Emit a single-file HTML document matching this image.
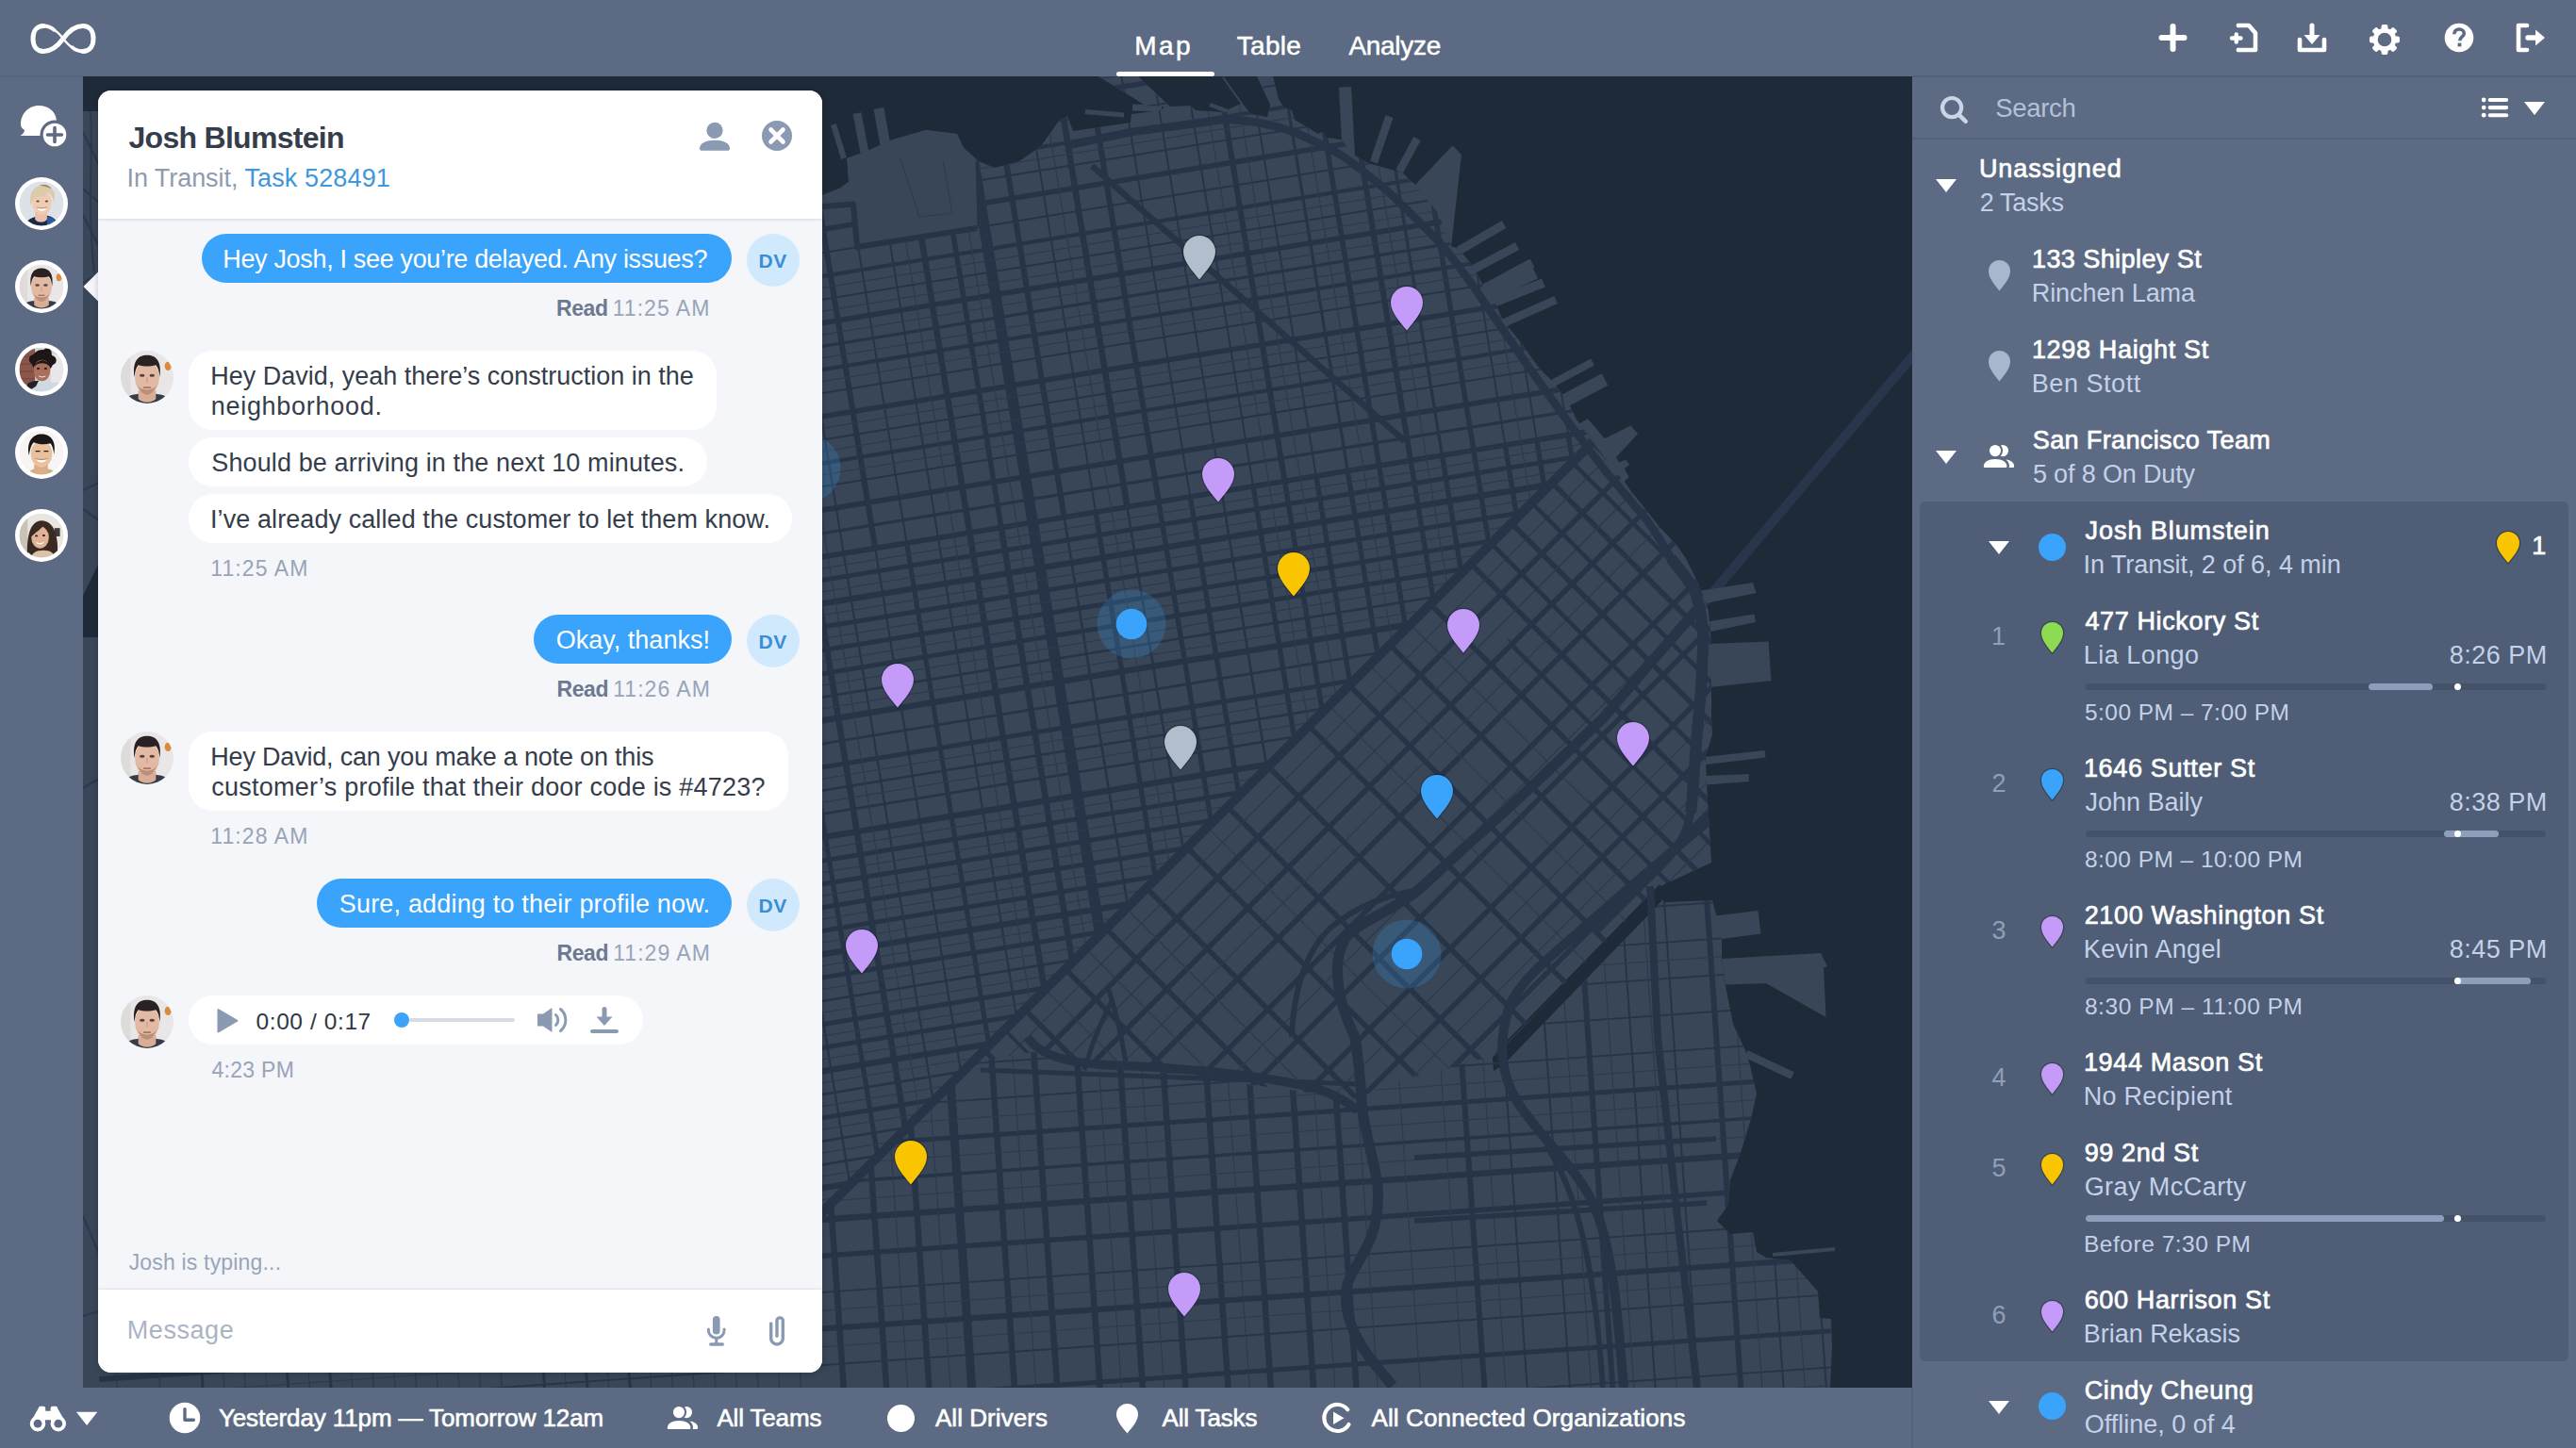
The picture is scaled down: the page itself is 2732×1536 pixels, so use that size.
<!DOCTYPE html><html lang="en"><head><meta charset="utf-8"><title>Dashboard</title>
<style>
*{box-sizing:border-box;margin:0;padding:0}
html,body{width:2732px;height:1536px;overflow:hidden;background:#5c6b83}
body{position:relative;font-family:"Liberation Sans",sans-serif;}
.abs{position:absolute;display:block}
.t{position:absolute;white-space:nowrap;display:block}
.bg{position:absolute}
.layer{position:absolute;left:0;top:0;width:0;height:0}
#chatpanel{position:absolute;left:104px;top:96px;width:768px;height:1360px;border-radius:14px;background:#f4f6fa;overflow:hidden;box-shadow:0 1px 6px rgba(10,20,35,.22)}
#chathead{position:absolute;left:0;top:0;width:768px;height:136px;background:#fff;box-shadow:0 1px 3px rgba(60,80,110,.18)}
#chatinput{position:absolute;left:0;top:1272px;width:768px;height:88px;background:#fff;box-shadow:0 -1px 2px rgba(60,80,110,.12)}
</style></head><body>
<div class="bg" style="left:0;top:0;width:2732px;height:1536px;background:#5c6b83"></div>
<svg id="map" class="abs" style="left:88px;top:81px" width="1940" height="1391" viewBox="88 81 1940 1391">
<rect x="88" y="81" width="1940" height="1391" fill="#1e2a38"/>
<path d="M1806.0 641.0L2040.0 364.0" stroke="#28354b" stroke-width="10" stroke-linecap="butt" fill="none"/>
<polygon points="88.0,118.0 300.0,118.0 700.0,150.0 860.0,212.0 872.0,207.0 890.0,200.0 900.0,193.0 898.0,168.0 920.0,160.0 947.0,148.0 982.0,138.0 1015.0,142.0 1022.0,157.0 1038.0,171.0 1055.0,178.0 1081.0,171.0 1104.0,155.0 1123.0,128.0 1132.0,123.0 1138.0,139.0 1199.0,130.0 1200.0,121.0 1232.0,117.0 1234.0,113.0 1215.0,112.0 1165.0,81.0 1207.0,81.0 1241.0,113.0 1263.0,112.0 1268.0,117.0 1300.0,119.0 1303.0,116.0 1317.0,109.0 1327.0,121.0 1344.0,124.0 1347.0,111.0 1333.0,81.0 1350.0,81.0 1356.0,105.0 1361.0,113.0 1370.0,117.0 1373.0,127.0 1398.0,142.0 1403.0,140.0 1407.0,146.0 1422.0,148.0 1437.0,165.0 1451.0,173.0 1479.0,181.0 1488.0,184.0 1501.0,196.0 1525.0,226.0 1539.0,261.0 1547.0,264.0 1562.0,282.0 1573.0,303.0 1584.0,316.0 1594.0,340.0 1612.0,362.0 1632.0,390.0 1647.0,405.0 1662.0,424.0 1672.0,445.0 1690.0,470.0 1710.0,496.0 1729.0,520.0 1745.0,540.0 1761.0,560.0 1778.0,578.0 1787.0,591.0 1797.0,610.0 1804.0,626.0 1812.0,648.0 1815.0,683.0 1815.0,760.0 1816.0,779.0 1809.0,803.0 1810.0,832.0 1815.0,915.0 1757.0,942.0 1765.0,957.0 1816.0,955.0 1820.0,970.0 1826.0,996.0 1826.0,1017.0 1830.0,1046.0 1838.0,1086.0 1851.0,1114.0 1856.0,1130.0 1863.0,1160.0 1857.0,1187.0 1846.0,1223.0 1835.0,1252.0 1833.0,1278.0 1821.0,1295.0 1835.0,1309.0 1859.0,1307.0 1863.0,1328.0 1873.0,1334.0 1899.0,1337.0 1928.0,1370.0 1930.0,1398.0 1942.0,1399.0 1943.0,1428.0 1941.0,1472.0 88.0,1472.0" fill="#384658" />
<polygon points="897.9,167.1 886.9,131.1 881.1,132.9 892.1,168.9" fill="#384658" />
<polygon points="921.4,161.2 913.4,119.2 904.6,120.8 912.6,162.8" fill="#384658" />
<polygon points="945.4,159.0 937.4,114.0 926.6,116.0 934.6,161.0" fill="#384658" />
<polygon points="1150.8,121.0 1191.8,124.5 1192.2,119.5 1151.2,116.0" fill="#384658" />
<polygon points="1200.9,117.5 1231.9,118.5 1232.1,111.5 1201.1,110.5" fill="#384658" />
<polygon points="1282.3,112.9 1301.3,119.9 1302.7,116.1 1283.7,109.1" fill="#384658" />
<polygon points="1296.2,82.6 1316.2,110.6 1317.8,109.4 1297.8,81.4" fill="#384658" />
<polygon points="1420.0,92.5 1433.0,92.0 1437.0,165.0 1423.0,150.0" fill="#384658" />
<polygon points="1461.0,173.4 1477.5,124.9 1469.5,122.1 1453.0,170.6" fill="#384658" />
<polygon points="1487.7,184.0 1506.7,149.0 1499.3,145.0 1480.3,180.0" fill="#384658" />
<polygon points="1501.0,196.0 1540.5,154.5 1550.0,164.0 1539.0,262.0" fill="#384658" />
<polygon points="1549.3,269.9 1597.3,241.9 1592.7,234.1 1544.7,262.1" fill="#384658" />
<polygon points="1564.1,290.0 1611.1,265.0 1606.9,257.0 1559.9,282.0" fill="#384658" />
<polygon points="1575.4,311.4 1627.4,283.4 1622.6,274.6 1570.6,302.6" fill="#384658" />
<polygon points="1585.8,325.6 1638.8,304.6 1635.2,295.4 1582.2,316.4" fill="#384658" />
<polygon points="1580.1,320.3 1631.1,295.3 1624.9,282.7 1573.9,307.7" fill="#384658" />
<polygon points="1595.8,347.1 1651.8,322.1 1648.2,313.9 1592.2,338.9" fill="#384658" />
<polygon points="1647.9,410.5 1690.9,387.5 1687.1,380.5 1644.1,403.5" fill="#384658" />
<polygon points="1674.0,449.7 1684.0,444.2 1701.8,465.2 1729.4,451.4 1737.0,460.2 1714.0,485.0 1717.2,490.6 1724.0,487.8 1728.3,492.8 1722.8,497.2 1727.7,506.0 1722.8,510.5 1729.4,520.4 1700.0,490.0" fill="#384658" />
<polygon points="1658.3,433.7 1705.3,408.7 1698.7,396.3 1651.7,421.3" fill="#384658" />
<polygon points="1804.0,626.5 1859.0,618.0 1862.5,629.0 1809.0,640.0" fill="#384658" />
<polygon points="1813.0,659.0 1860.5,651.5 1862.0,660.0 1814.0,670.0" fill="#384658" />
<polygon points="1813.0,683.0 1875.5,680.5 1878.5,722.0 1813.0,729.0" fill="#384658" />
<polygon points="1808.0,803.0 1871.5,796.0 1872.5,803.5 1809.0,811.0" fill="#384658" />
<polygon points="1809.0,823.0 1854.5,821.0 1855.0,829.0 1810.0,832.5" fill="#384658" />
<polygon points="1815.0,972.0 1864.5,966.0 1867.5,990.5 1826.0,996.0" fill="#384658" />
<polygon points="1826.0,1017.0 1931.0,1011.0 1938.0,1025.0 1934.0,1026.5 1936.5,1079.0 1873.0,1043.0 1830.0,1044.5" fill="#384658" />
<polygon points="1850.2,1121.8 1899.2,1144.8 1902.8,1137.2 1853.8,1114.2" fill="#384658" />
<polygon points="1880.2,1333.0 1946.2,1327.0 1945.8,1323.0 1879.8,1329.0" fill="#384658" />
<polygon points="1760.0,938.0 1768.0,950.0 1596.0,1128.0 1584.0,1136.0 1583.0,1122.0 1590.0,1112.0" fill="#1e2a38" />
<defs>
<clipPath id="landclip"><polygon points="88.0,118.0 300.0,118.0 700.0,150.0 860.0,212.0 872.0,207.0 890.0,200.0 900.0,193.0 898.0,168.0 920.0,160.0 947.0,148.0 982.0,138.0 1015.0,142.0 1022.0,157.0 1038.0,171.0 1055.0,178.0 1081.0,171.0 1104.0,155.0 1123.0,128.0 1132.0,123.0 1138.0,139.0 1199.0,130.0 1200.0,121.0 1232.0,117.0 1234.0,113.0 1215.0,112.0 1165.0,81.0 1207.0,81.0 1241.0,113.0 1263.0,112.0 1268.0,117.0 1300.0,119.0 1303.0,116.0 1317.0,109.0 1327.0,121.0 1344.0,124.0 1347.0,111.0 1333.0,81.0 1350.0,81.0 1356.0,105.0 1361.0,113.0 1370.0,117.0 1373.0,127.0 1398.0,142.0 1403.0,140.0 1407.0,146.0 1422.0,148.0 1437.0,165.0 1451.0,173.0 1479.0,181.0 1488.0,184.0 1501.0,196.0 1525.0,226.0 1539.0,261.0 1547.0,264.0 1562.0,282.0 1573.0,303.0 1584.0,316.0 1594.0,340.0 1612.0,362.0 1632.0,390.0 1647.0,405.0 1662.0,424.0 1672.0,445.0 1690.0,470.0 1710.0,496.0 1729.0,520.0 1745.0,540.0 1761.0,560.0 1778.0,578.0 1787.0,591.0 1797.0,610.0 1804.0,626.0 1812.0,648.0 1815.0,683.0 1815.0,760.0 1816.0,779.0 1809.0,803.0 1810.0,832.0 1815.0,915.0 1757.0,942.0 1765.0,957.0 1816.0,955.0 1820.0,970.0 1826.0,996.0 1826.0,1017.0 1830.0,1046.0 1838.0,1086.0 1851.0,1114.0 1856.0,1130.0 1863.0,1160.0 1857.0,1187.0 1846.0,1223.0 1835.0,1252.0 1833.0,1278.0 1821.0,1295.0 1835.0,1309.0 1859.0,1307.0 1863.0,1328.0 1873.0,1334.0 1899.0,1337.0 1928.0,1370.0 1930.0,1398.0 1942.0,1399.0 1943.0,1428.0 1941.0,1472.0 88.0,1472.0"/></clipPath>
<clipPath id="cN"><polygon points="88.0,81.0 1700.0,81.0 1700.0,455.0 1690.0,468.0 872.0,1286.0 88.0,1286.0"/></clipPath>
<clipPath id="cS"><polygon points="1690.0,468.0 1840.0,600.0 1840.0,915.0 1757.0,942.0 1588.0,1119.0 1470.0,1150.0 1440.0,1166.0 1250.0,1140.0 1096.0,1116.0 1030.0,1127.0 1017.4,1140.6"/></clipPath>
<clipPath id="cM"><polygon points="88.0,1286.0 872.0,1286.0 1017.4,1140.6 1030.0,1127.0 1096.0,1116.0 1250.0,1140.0 1440.0,1166.0 1470.0,1150.0 1588.0,1119.0 1596.0,1128.0 1768.0,950.0 1900.0,950.0 2028.0,1100.0 2028.0,1472.0 88.0,1472.0"/></clipPath>
</defs>
<g clip-path="url(#landclip)">
<defs><clipPath id="cNa"><polygon points="88.0,81.0 1700.0,81.0 1700.0,455.2 88.0,718.9"/></clipPath><clipPath id="cNb"><polygon points="88.0,718.9 1700.0,455.2 1700.0,455.0 1690.0,468.0 872.0,1286.0 88.0,1286.0"/></clipPath></defs>
<g clip-path="url(#cNa)"><path d="M-2094.6 -362.4L3826.7 -1331.1" stroke="#273447" stroke-width="5.6" stroke-linecap="butt" fill="none"/><path d="M-2090.7 -338.3L3830.6 -1307.0" stroke="#273447" stroke-width="2.0" stroke-linecap="butt" fill="none"/><path d="M-2086.7 -314.1L3834.6 -1282.8" stroke="#273447" stroke-width="4.2" stroke-linecap="butt" fill="none"/><path d="M-2082.8 -289.9L3838.5 -1258.7" stroke="#273447" stroke-width="3.2" stroke-linecap="butt" fill="none"/><path d="M-2078.8 -265.8L3842.5 -1234.5" stroke="#273447" stroke-width="5.6" stroke-linecap="butt" fill="none"/><path d="M-2074.9 -241.6L3846.4 -1210.4" stroke="#273447" stroke-width="2.0" stroke-linecap="butt" fill="none"/><path d="M-2070.9 -217.5L3850.4 -1186.2" stroke="#273447" stroke-width="4.2" stroke-linecap="butt" fill="none"/><path d="M-2067.0 -193.3L3854.3 -1162.1" stroke="#273447" stroke-width="2.0" stroke-linecap="butt" fill="none"/><path d="M-2063.0 -169.2L3858.3 -1137.9" stroke="#273447" stroke-width="5.6" stroke-linecap="butt" fill="none"/><path d="M-2059.0 -145.0L3862.2 -1113.7" stroke="#273447" stroke-width="2.0" stroke-linecap="butt" fill="none"/><path d="M-2055.1 -120.9L3866.2 -1089.6" stroke="#273447" stroke-width="4.2" stroke-linecap="butt" fill="none"/><path d="M-2051.1 -96.7L3870.1 -1065.4" stroke="#273447" stroke-width="2.0" stroke-linecap="butt" fill="none"/><path d="M-2047.2 -72.6L3874.1 -1041.3" stroke="#273447" stroke-width="5.6" stroke-linecap="butt" fill="none"/><path d="M-2043.2 -48.4L3878.0 -1017.1" stroke="#273447" stroke-width="2.0" stroke-linecap="butt" fill="none"/><path d="M-2039.3 -24.3L3882.0 -993.0" stroke="#273447" stroke-width="4.2" stroke-linecap="butt" fill="none"/><path d="M-2035.3 -0.1L3885.9 -968.8" stroke="#273447" stroke-width="2.0" stroke-linecap="butt" fill="none"/><path d="M-2031.4 24.0L3889.9 -944.7" stroke="#273447" stroke-width="5.6" stroke-linecap="butt" fill="none"/><path d="M-2027.4 48.2L3893.8 -920.5" stroke="#273447" stroke-width="2.0" stroke-linecap="butt" fill="none"/><path d="M-2023.5 72.4L3897.8 -896.4" stroke="#273447" stroke-width="2.0" stroke-linecap="butt" fill="none"/><path d="M-2019.5 96.5L3901.7 -872.2" stroke="#273447" stroke-width="2.0" stroke-linecap="butt" fill="none"/><path d="M-2015.6 120.7L3905.7 -848.1" stroke="#273447" stroke-width="5.6" stroke-linecap="butt" fill="none"/><path d="M-2011.6 144.8L3909.7 -823.9" stroke="#273447" stroke-width="2.0" stroke-linecap="butt" fill="none"/><path d="M-2007.7 169.0L3913.6 -799.8" stroke="#273447" stroke-width="2.0" stroke-linecap="butt" fill="none"/><path d="M-2003.7 193.1L3917.6 -775.6" stroke="#273447" stroke-width="3.2" stroke-linecap="butt" fill="none"/><path d="M-1999.8 217.3L3921.5 -751.4" stroke="#273447" stroke-width="5.6" stroke-linecap="butt" fill="none"/><path d="M-1995.8 241.4L3925.5 -727.3" stroke="#273447" stroke-width="2.0" stroke-linecap="butt" fill="none"/><path d="M-1991.9 265.6L3929.4 -703.1" stroke="#273447" stroke-width="4.2" stroke-linecap="butt" fill="none"/><path d="M-1987.9 289.7L3933.4 -679.0" stroke="#273447" stroke-width="3.2" stroke-linecap="butt" fill="none"/><path d="M-1984.0 313.9L3937.3 -654.8" stroke="#273447" stroke-width="5.6" stroke-linecap="butt" fill="none"/><path d="M-1980.0 338.0L3941.3 -630.7" stroke="#273447" stroke-width="2.0" stroke-linecap="butt" fill="none"/><path d="M-1976.1 362.2L3945.2 -606.5" stroke="#273447" stroke-width="2.0" stroke-linecap="butt" fill="none"/><path d="M-1972.1 386.4L3949.2 -582.4" stroke="#273447" stroke-width="2.0" stroke-linecap="butt" fill="none"/><path d="M-1968.2 410.5L3953.1 -558.2" stroke="#273447" stroke-width="5.6" stroke-linecap="butt" fill="none"/><path d="M-1964.2 434.7L3957.1 -534.1" stroke="#273447" stroke-width="2.0" stroke-linecap="butt" fill="none"/><path d="M-1960.3 458.8L3961.0 -509.9" stroke="#273447" stroke-width="4.2" stroke-linecap="butt" fill="none"/><path d="M-1956.3 483.0L3965.0 -485.8" stroke="#273447" stroke-width="2.0" stroke-linecap="butt" fill="none"/><path d="M-1952.4 507.1L3968.9 -461.6" stroke="#273447" stroke-width="5.6" stroke-linecap="butt" fill="none"/><path d="M-1948.4 531.3L3972.9 -437.4" stroke="#273447" stroke-width="3.2" stroke-linecap="butt" fill="none"/><path d="M-1944.5 555.4L3976.8 -413.3" stroke="#273447" stroke-width="4.2" stroke-linecap="butt" fill="none"/><path d="M-1940.5 579.6L3980.8 -389.1" stroke="#273447" stroke-width="2.0" stroke-linecap="butt" fill="none"/><path d="M-1936.6 603.7L3984.7 -365.0" stroke="#273447" stroke-width="5.6" stroke-linecap="butt" fill="none"/><path d="M-1932.6 627.9L3988.7 -340.8" stroke="#273447" stroke-width="2.0" stroke-linecap="butt" fill="none"/><path d="M-1928.6 652.0L3992.6 -316.7" stroke="#273447" stroke-width="4.2" stroke-linecap="butt" fill="none"/><path d="M-1924.7 676.2L3996.6 -292.5" stroke="#273447" stroke-width="2.0" stroke-linecap="butt" fill="none"/><path d="M-1920.7 700.3L4000.5 -268.4" stroke="#273447" stroke-width="5.6" stroke-linecap="butt" fill="none"/><path d="M-1916.8 724.5L4004.5 -244.2" stroke="#273447" stroke-width="2.0" stroke-linecap="butt" fill="none"/><path d="M-1912.8 748.7L4008.4 -220.1" stroke="#273447" stroke-width="4.2" stroke-linecap="butt" fill="none"/><path d="M-1908.9 772.8L4012.4 -195.9" stroke="#273447" stroke-width="2.0" stroke-linecap="butt" fill="none"/><path d="M-1904.9 797.0L4016.3 -171.8" stroke="#273447" stroke-width="5.6" stroke-linecap="butt" fill="none"/><path d="M-1901.0 821.1L4020.3 -147.6" stroke="#273447" stroke-width="3.2" stroke-linecap="butt" fill="none"/><path d="M-1897.0 845.3L4024.2 -123.5" stroke="#273447" stroke-width="4.2" stroke-linecap="butt" fill="none"/><path d="M-1893.1 869.4L4028.2 -99.3" stroke="#273447" stroke-width="2.0" stroke-linecap="butt" fill="none"/><path d="M-1889.1 893.6L4032.1 -75.1" stroke="#273447" stroke-width="5.6" stroke-linecap="butt" fill="none"/><path d="M-1885.2 917.7L4036.1 -51.0" stroke="#273447" stroke-width="2.0" stroke-linecap="butt" fill="none"/><path d="M-1881.2 941.9L4040.1 -26.8" stroke="#273447" stroke-width="4.2" stroke-linecap="butt" fill="none"/><path d="M-1877.3 966.0L4044.0 -2.7" stroke="#273447" stroke-width="2.0" stroke-linecap="butt" fill="none"/><path d="M-1873.3 990.2L4048.0 21.5" stroke="#273447" stroke-width="5.6" stroke-linecap="butt" fill="none"/><path d="M-1869.4 1014.3L4051.9 45.6" stroke="#273447" stroke-width="3.2" stroke-linecap="butt" fill="none"/><path d="M-1865.4 1038.5L4055.9 69.8" stroke="#273447" stroke-width="5.6" stroke-linecap="butt" fill="none"/><path d="M-1861.5 1062.7L4059.8 93.9" stroke="#273447" stroke-width="3.2" stroke-linecap="butt" fill="none"/><path d="M-1857.5 1086.8L4063.8 118.1" stroke="#273447" stroke-width="5.6" stroke-linecap="butt" fill="none"/><path d="M-1853.6 1111.0L4067.7 142.2" stroke="#273447" stroke-width="2.0" stroke-linecap="butt" fill="none"/><path d="M-1849.6 1135.1L4071.7 166.4" stroke="#273447" stroke-width="4.2" stroke-linecap="butt" fill="none"/><path d="M-1845.7 1159.3L4075.6 190.5" stroke="#273447" stroke-width="2.0" stroke-linecap="butt" fill="none"/><path d="M-1841.7 1183.4L4079.6 214.7" stroke="#273447" stroke-width="5.6" stroke-linecap="butt" fill="none"/><path d="M-1837.8 1207.6L4083.5 238.9" stroke="#273447" stroke-width="3.2" stroke-linecap="butt" fill="none"/><path d="M-1833.8 1231.7L4087.5 263.0" stroke="#273447" stroke-width="2.0" stroke-linecap="butt" fill="none"/><path d="M-1829.9 1255.9L4091.4 287.2" stroke="#273447" stroke-width="2.0" stroke-linecap="butt" fill="none"/><path d="M-1825.9 1280.0L4095.4 311.3" stroke="#273447" stroke-width="5.6" stroke-linecap="butt" fill="none"/><path d="M-1822.0 1304.2L4099.3 335.5" stroke="#273447" stroke-width="3.2" stroke-linecap="butt" fill="none"/><path d="M-1818.0 1328.3L4103.3 359.6" stroke="#273447" stroke-width="4.2" stroke-linecap="butt" fill="none"/><path d="M-1814.1 1352.5L4107.2 383.8" stroke="#273447" stroke-width="2.0" stroke-linecap="butt" fill="none"/><path d="M-1810.1 1376.6L4111.2 407.9" stroke="#273447" stroke-width="5.6" stroke-linecap="butt" fill="none"/><path d="M-1806.2 1400.8L4115.1 432.1" stroke="#273447" stroke-width="3.2" stroke-linecap="butt" fill="none"/><path d="M-1802.2 1425.0L4119.1 456.2" stroke="#273447" stroke-width="4.2" stroke-linecap="butt" fill="none"/><path d="M-1798.2 1449.1L4123.0 480.4" stroke="#273447" stroke-width="2.0" stroke-linecap="butt" fill="none"/><path d="M-1794.3 1473.3L4127.0 504.5" stroke="#273447" stroke-width="5.6" stroke-linecap="butt" fill="none"/><path d="M-1790.3 1497.4L4130.9 528.7" stroke="#273447" stroke-width="2.0" stroke-linecap="butt" fill="none"/><path d="M-1786.4 1521.6L4134.9 552.8" stroke="#273447" stroke-width="2.0" stroke-linecap="butt" fill="none"/><path d="M-1782.4 1545.7L4138.8 577.0" stroke="#273447" stroke-width="3.2" stroke-linecap="butt" fill="none"/><path d="M-1778.5 1569.9L4142.8 601.2" stroke="#273447" stroke-width="5.6" stroke-linecap="butt" fill="none"/><path d="M-1774.5 1594.0L4146.7 625.3" stroke="#273447" stroke-width="2.0" stroke-linecap="butt" fill="none"/><path d="M-1770.6 1618.2L4150.7 649.5" stroke="#273447" stroke-width="2.0" stroke-linecap="butt" fill="none"/><path d="M-1766.6 1642.3L4154.6 673.6" stroke="#273447" stroke-width="2.0" stroke-linecap="butt" fill="none"/><path d="M-1762.7 1666.5L4158.6 697.8" stroke="#273447" stroke-width="5.6" stroke-linecap="butt" fill="none"/><path d="M-1758.7 1690.6L4162.5 721.9" stroke="#273447" stroke-width="3.2" stroke-linecap="butt" fill="none"/><path d="M-1754.8 1714.8L4166.5 746.1" stroke="#273447" stroke-width="4.2" stroke-linecap="butt" fill="none"/><path d="M-1750.8 1739.0L4170.5 770.2" stroke="#273447" stroke-width="2.0" stroke-linecap="butt" fill="none"/><path d="M-1746.9 1763.1L4174.4 794.4" stroke="#273447" stroke-width="5.6" stroke-linecap="butt" fill="none"/><path d="M-1742.9 1787.3L4178.4 818.5" stroke="#273447" stroke-width="2.0" stroke-linecap="butt" fill="none"/><path d="M-1739.0 1811.4L4182.3 842.7" stroke="#273447" stroke-width="2.0" stroke-linecap="butt" fill="none"/><path d="M-1735.0 1835.6L4186.3 866.8" stroke="#273447" stroke-width="3.2" stroke-linecap="butt" fill="none"/><path d="M-1731.1 1859.7L4190.2 891.0" stroke="#273447" stroke-width="5.6" stroke-linecap="butt" fill="none"/><path d="M-1727.1 1883.9L4194.2 915.2" stroke="#273447" stroke-width="2.0" stroke-linecap="butt" fill="none"/><path d="M-1723.2 1908.0L4198.1 939.3" stroke="#273447" stroke-width="2.0" stroke-linecap="butt" fill="none"/><path d="M-1719.2 1932.2L4202.1 963.5" stroke="#273447" stroke-width="2.0" stroke-linecap="butt" fill="none"/><path d="M-1715.3 1956.3L4206.0 987.6" stroke="#273447" stroke-width="5.6" stroke-linecap="butt" fill="none"/><path d="M-1711.3 1980.5L4210.0 1011.8" stroke="#273447" stroke-width="3.2" stroke-linecap="butt" fill="none"/><path d="M-1707.4 2004.6L4213.9 1035.9" stroke="#273447" stroke-width="2.0" stroke-linecap="butt" fill="none"/><path d="M-1703.4 2028.8L4217.9 1060.1" stroke="#273447" stroke-width="3.2" stroke-linecap="butt" fill="none"/><path d="M-1699.5 2052.9L4221.8 1084.2" stroke="#273447" stroke-width="5.6" stroke-linecap="butt" fill="none"/><path d="M-1695.5 2077.1L4225.8 1108.4" stroke="#273447" stroke-width="3.2" stroke-linecap="butt" fill="none"/><path d="M-1691.6 2101.3L4229.7 1132.5" stroke="#273447" stroke-width="4.2" stroke-linecap="butt" fill="none"/><path d="M-1687.6 2125.4L4233.7 1156.7" stroke="#273447" stroke-width="2.0" stroke-linecap="butt" fill="none"/><path d="M-1683.7 2149.6L4237.6 1180.8" stroke="#273447" stroke-width="5.6" stroke-linecap="butt" fill="none"/><path d="M-1679.7 2173.7L4241.6 1205.0" stroke="#273447" stroke-width="3.2" stroke-linecap="butt" fill="none"/><path d="M-1675.8 2197.9L4245.5 1229.1" stroke="#273447" stroke-width="4.2" stroke-linecap="butt" fill="none"/><path d="M-1671.8 2222.0L4249.5 1253.3" stroke="#273447" stroke-width="2.0" stroke-linecap="butt" fill="none"/><path d="M-1667.8 2246.2L4253.4 1277.5" stroke="#273447" stroke-width="5.6" stroke-linecap="butt" fill="none"/><path d="M-1663.9 2270.3L4257.4 1301.6" stroke="#273447" stroke-width="2.0" stroke-linecap="butt" fill="none"/><path d="M-1659.9 2294.5L4261.3 1325.8" stroke="#273447" stroke-width="4.2" stroke-linecap="butt" fill="none"/><path d="M-1656.0 2318.6L4265.3 1349.9" stroke="#273447" stroke-width="2.0" stroke-linecap="butt" fill="none"/><path d="M-1652.0 2342.8L4269.2 1374.1" stroke="#273447" stroke-width="5.6" stroke-linecap="butt" fill="none"/><path d="M-1648.1 2366.9L4273.2 1398.2" stroke="#273447" stroke-width="3.2" stroke-linecap="butt" fill="none"/><path d="M-1644.1 2391.1L4277.1 1422.4" stroke="#273447" stroke-width="4.2" stroke-linecap="butt" fill="none"/><path d="M-1640.2 2415.2L4281.1 1446.5" stroke="#273447" stroke-width="2.0" stroke-linecap="butt" fill="none"/><path d="M-1636.2 2439.4L4285.0 1470.7" stroke="#273447" stroke-width="5.6" stroke-linecap="butt" fill="none"/><path d="M-1632.3 2463.6L4289.0 1494.8" stroke="#273447" stroke-width="2.0" stroke-linecap="butt" fill="none"/><path d="M-1628.3 2487.7L4292.9 1519.0" stroke="#273447" stroke-width="2.0" stroke-linecap="butt" fill="none"/><path d="M-1624.4 2511.9L4296.9 1543.1" stroke="#273447" stroke-width="2.0" stroke-linecap="butt" fill="none"/><path d="M-1620.4 2536.0L4300.9 1567.3" stroke="#273447" stroke-width="5.6" stroke-linecap="butt" fill="none"/><path d="M-884.5 -2112.3L84.2 3809.0" stroke="#273447" stroke-width="2.0" stroke-linecap="butt" fill="none"/><path d="M-851.1 -2117.7L117.6 3803.6" stroke="#273447" stroke-width="2.0" stroke-linecap="butt" fill="none"/><path d="M-817.7 -2123.2L151.0 3798.1" stroke="#273447" stroke-width="3.2" stroke-linecap="butt" fill="none"/><path d="M-784.3 -2128.7L184.4 3792.6" stroke="#273447" stroke-width="3.2" stroke-linecap="butt" fill="none"/><path d="M-750.9 -2134.1L217.8 3787.2" stroke="#273447" stroke-width="3.2" stroke-linecap="butt" fill="none"/><path d="M-717.5 -2139.6L251.2 3781.7" stroke="#273447" stroke-width="2.0" stroke-linecap="butt" fill="none"/><path d="M-684.1 -2145.1L284.7 3776.2" stroke="#273447" stroke-width="2.0" stroke-linecap="butt" fill="none"/><path d="M-650.7 -2150.5L318.1 3770.8" stroke="#273447" stroke-width="2.0" stroke-linecap="butt" fill="none"/><path d="M-617.3 -2156.0L351.5 3765.3" stroke="#273447" stroke-width="3.2" stroke-linecap="butt" fill="none"/><path d="M-583.9 -2161.4L384.9 3759.8" stroke="#273447" stroke-width="3.2" stroke-linecap="butt" fill="none"/><path d="M-550.4 -2166.9L418.3 3754.4" stroke="#273447" stroke-width="2.0" stroke-linecap="butt" fill="none"/><path d="M-517.0 -2172.4L451.7 3748.9" stroke="#273447" stroke-width="2.0" stroke-linecap="butt" fill="none"/><path d="M-483.6 -2177.8L485.1 3743.4" stroke="#273447" stroke-width="2.0" stroke-linecap="butt" fill="none"/><path d="M-450.2 -2183.3L518.5 3738.0" stroke="#273447" stroke-width="2.0" stroke-linecap="butt" fill="none"/><path d="M-416.8 -2188.8L551.9 3732.5" stroke="#273447" stroke-width="2.0" stroke-linecap="butt" fill="none"/><path d="M-383.4 -2194.2L585.3 3727.0" stroke="#273447" stroke-width="2.0" stroke-linecap="butt" fill="none"/><path d="M-350.0 -2199.7L618.7 3721.6" stroke="#273447" stroke-width="2.0" stroke-linecap="butt" fill="none"/><path d="M-316.6 -2205.2L652.1 3716.1" stroke="#273447" stroke-width="2.0" stroke-linecap="butt" fill="none"/><path d="M-283.2 -2210.6L685.5 3710.6" stroke="#273447" stroke-width="2.0" stroke-linecap="butt" fill="none"/><path d="M-249.8 -2216.1L718.9 3705.2" stroke="#273447" stroke-width="2.0" stroke-linecap="butt" fill="none"/><path d="M-216.4 -2221.6L752.3 3699.7" stroke="#273447" stroke-width="2.0" stroke-linecap="butt" fill="none"/><path d="M-183.0 -2227.0L785.7 3694.3" stroke="#273447" stroke-width="3.2" stroke-linecap="butt" fill="none"/><path d="M-149.6 -2232.5L819.1 3688.8" stroke="#273447" stroke-width="3.2" stroke-linecap="butt" fill="none"/><path d="M-116.2 -2238.0L852.6 3683.3" stroke="#273447" stroke-width="2.0" stroke-linecap="butt" fill="none"/><path d="M-82.8 -2243.4L886.0 3677.9" stroke="#273447" stroke-width="3.2" stroke-linecap="butt" fill="none"/><path d="M-49.4 -2248.9L919.4 3672.4" stroke="#273447" stroke-width="3.2" stroke-linecap="butt" fill="none"/><path d="M-16.0 -2254.4L952.8 3666.9" stroke="#273447" stroke-width="2.0" stroke-linecap="butt" fill="none"/><path d="M17.5 -2259.8L986.2 3661.5" stroke="#273447" stroke-width="3.2" stroke-linecap="butt" fill="none"/><path d="M50.9 -2265.3L1019.6 3656.0" stroke="#273447" stroke-width="3.2" stroke-linecap="butt" fill="none"/><path d="M84.3 -2270.8L1053.0 3650.5" stroke="#273447" stroke-width="3.2" stroke-linecap="butt" fill="none"/><path d="M117.7 -2276.2L1086.4 3645.1" stroke="#273447" stroke-width="3.2" stroke-linecap="butt" fill="none"/><path d="M151.1 -2281.7L1119.8 3639.6" stroke="#273447" stroke-width="2.0" stroke-linecap="butt" fill="none"/><path d="M184.5 -2287.1L1153.2 3634.1" stroke="#273447" stroke-width="2.0" stroke-linecap="butt" fill="none"/><path d="M217.9 -2292.6L1186.6 3628.7" stroke="#273447" stroke-width="2.0" stroke-linecap="butt" fill="none"/><path d="M251.3 -2298.1L1220.0 3623.2" stroke="#273447" stroke-width="3.2" stroke-linecap="butt" fill="none"/><path d="M284.7 -2303.5L1253.4 3617.7" stroke="#273447" stroke-width="2.0" stroke-linecap="butt" fill="none"/><path d="M318.1 -2309.0L1286.8 3612.3" stroke="#273447" stroke-width="2.0" stroke-linecap="butt" fill="none"/><path d="M351.5 -2314.5L1320.2 3606.8" stroke="#273447" stroke-width="6" stroke-linecap="butt" fill="none"/><path d="M384.9 -2319.9L1353.6 3601.3" stroke="#273447" stroke-width="2.0" stroke-linecap="butt" fill="none"/><path d="M418.3 -2325.4L1387.0 3595.9" stroke="#273447" stroke-width="2.0" stroke-linecap="butt" fill="none"/><path d="M451.7 -2330.9L1420.5 3590.4" stroke="#273447" stroke-width="6" stroke-linecap="butt" fill="none"/><path d="M485.1 -2336.3L1453.9 3584.9" stroke="#273447" stroke-width="2.0" stroke-linecap="butt" fill="none"/><path d="M518.5 -2341.8L1487.3 3579.5" stroke="#273447" stroke-width="2.0" stroke-linecap="butt" fill="none"/><path d="M551.9 -2347.3L1520.7 3574.0" stroke="#273447" stroke-width="6.5" stroke-linecap="butt" fill="none"/><path d="M585.4 -2352.7L1554.1 3568.6" stroke="#273447" stroke-width="5.5" stroke-linecap="butt" fill="none"/><path d="M618.8 -2358.2L1587.5 3563.1" stroke="#273447" stroke-width="11.5" stroke-linecap="butt" fill="none"/><path d="M652.2 -2363.7L1620.9 3557.6" stroke="#273447" stroke-width="6" stroke-linecap="butt" fill="none"/><path d="M685.6 -2369.1L1654.3 3552.2" stroke="#273447" stroke-width="2.0" stroke-linecap="butt" fill="none"/><path d="M719.0 -2374.6L1687.7 3546.7" stroke="#273447" stroke-width="6.5" stroke-linecap="butt" fill="none"/><path d="M752.4 -2380.1L1721.1 3541.2" stroke="#273447" stroke-width="6" stroke-linecap="butt" fill="none"/><path d="M785.8 -2385.5L1754.5 3535.8" stroke="#273447" stroke-width="2.0" stroke-linecap="butt" fill="none"/><path d="M819.2 -2391.0L1787.9 3530.3" stroke="#273447" stroke-width="2.0" stroke-linecap="butt" fill="none"/><path d="M852.6 -2396.5L1821.3 3524.8" stroke="#273447" stroke-width="2.0" stroke-linecap="butt" fill="none"/><path d="M886.0 -2401.9L1854.7 3519.4" stroke="#273447" stroke-width="6" stroke-linecap="butt" fill="none"/><path d="M919.4 -2407.4L1888.1 3513.9" stroke="#273447" stroke-width="2.0" stroke-linecap="butt" fill="none"/><path d="M952.8 -2412.8L1921.5 3508.4" stroke="#273447" stroke-width="3.2" stroke-linecap="butt" fill="none"/><path d="M986.2 -2418.3L1954.9 3503.0" stroke="#273447" stroke-width="5.5" stroke-linecap="butt" fill="none"/><path d="M1019.6 -2423.8L1988.4 3497.5" stroke="#273447" stroke-width="6" stroke-linecap="butt" fill="none"/><path d="M1053.0 -2429.2L2021.8 3492.0" stroke="#273447" stroke-width="3.2" stroke-linecap="butt" fill="none"/><path d="M1086.4 -2434.7L2055.2 3486.6" stroke="#273447" stroke-width="5.5" stroke-linecap="butt" fill="none"/><path d="M1119.8 -2440.2L2088.6 3481.1" stroke="#273447" stroke-width="2.0" stroke-linecap="butt" fill="none"/><path d="M1153.3 -2445.6L2122.0 3475.6" stroke="#273447" stroke-width="2.0" stroke-linecap="butt" fill="none"/><path d="M1186.7 -2451.1L2155.4 3470.2" stroke="#273447" stroke-width="2.0" stroke-linecap="butt" fill="none"/><path d="M1220.1 -2456.6L2188.8 3464.7" stroke="#273447" stroke-width="2.0" stroke-linecap="butt" fill="none"/><path d="M1253.5 -2462.0L2222.2 3459.2" stroke="#273447" stroke-width="2.0" stroke-linecap="butt" fill="none"/><path d="M1286.9 -2467.5L2255.6 3453.8" stroke="#273447" stroke-width="3.2" stroke-linecap="butt" fill="none"/><path d="M1320.3 -2473.0L2289.0 3448.3" stroke="#273447" stroke-width="3.2" stroke-linecap="butt" fill="none"/><path d="M1353.7 -2478.4L2322.4 3442.9" stroke="#273447" stroke-width="2.0" stroke-linecap="butt" fill="none"/><path d="M1387.1 -2483.9L2355.8 3437.4" stroke="#273447" stroke-width="2.0" stroke-linecap="butt" fill="none"/><path d="M1420.5 -2489.4L2389.2 3431.9" stroke="#273447" stroke-width="2.0" stroke-linecap="butt" fill="none"/><path d="M1453.9 -2494.8L2422.6 3426.5" stroke="#273447" stroke-width="2.0" stroke-linecap="butt" fill="none"/><path d="M1487.3 -2500.3L2456.0 3421.0" stroke="#273447" stroke-width="2.0" stroke-linecap="butt" fill="none"/><path d="M1520.7 -2505.8L2489.4 3415.5" stroke="#273447" stroke-width="2.0" stroke-linecap="butt" fill="none"/><path d="M1554.1 -2511.2L2522.8 3410.1" stroke="#273447" stroke-width="3.2" stroke-linecap="butt" fill="none"/><path d="M1587.5 -2516.7L2556.3 3404.6" stroke="#273447" stroke-width="2.0" stroke-linecap="butt" fill="none"/><path d="M1620.9 -2522.2L2589.7 3399.1" stroke="#273447" stroke-width="2.0" stroke-linecap="butt" fill="none"/><path d="M1654.3 -2527.6L2623.1 3393.7" stroke="#273447" stroke-width="3.2" stroke-linecap="butt" fill="none"/><path d="M1687.7 -2533.1L2656.5 3388.2" stroke="#273447" stroke-width="2.0" stroke-linecap="butt" fill="none"/><path d="M1721.2 -2538.5L2689.9 3382.7" stroke="#273447" stroke-width="2.0" stroke-linecap="butt" fill="none"/><path d="M1754.6 -2544.0L2723.3 3377.3" stroke="#273447" stroke-width="2.0" stroke-linecap="butt" fill="none"/><path d="M1788.0 -2549.5L2756.7 3371.8" stroke="#273447" stroke-width="2.0" stroke-linecap="butt" fill="none"/><path d="M1821.4 -2554.9L2790.1 3366.3" stroke="#273447" stroke-width="2.0" stroke-linecap="butt" fill="none"/><path d="M1854.8 -2560.4L2823.5 3360.9" stroke="#273447" stroke-width="3.2" stroke-linecap="butt" fill="none"/><path d="M1888.2 -2565.9L2856.9 3355.4" stroke="#273447" stroke-width="3.2" stroke-linecap="butt" fill="none"/><path d="M1921.6 -2571.3L2890.3 3349.9" stroke="#273447" stroke-width="3.2" stroke-linecap="butt" fill="none"/><path d="M1955.0 -2576.8L2923.7 3344.5" stroke="#273447" stroke-width="2.0" stroke-linecap="butt" fill="none"/><path d="M1988.4 -2582.3L2957.1 3339.0" stroke="#273447" stroke-width="2.0" stroke-linecap="butt" fill="none"/><path d="M2021.8 -2587.7L2990.5 3333.5" stroke="#273447" stroke-width="2.0" stroke-linecap="butt" fill="none"/><path d="M2055.2 -2593.2L3023.9 3328.1" stroke="#273447" stroke-width="3.2" stroke-linecap="butt" fill="none"/><path d="M2088.6 -2598.7L3057.3 3322.6" stroke="#273447" stroke-width="2.0" stroke-linecap="butt" fill="none"/><path d="M2122.0 -2604.1L3090.7 3317.2" stroke="#273447" stroke-width="3.2" stroke-linecap="butt" fill="none"/></g>
<g clip-path="url(#cNb)"><path d="M-2094.6 -362.4L3826.7 -1331.1" stroke="#273447" stroke-width="6.4" stroke-linecap="butt" fill="none"/><path d="M-2090.7 -338.3L3830.6 -1307.0" stroke="#273447" stroke-width="4.9" stroke-linecap="butt" fill="none"/><path d="M-2086.7 -314.1L3834.6 -1282.8" stroke="#273447" stroke-width="4.9" stroke-linecap="butt" fill="none"/><path d="M-2082.8 -289.9L3838.5 -1258.7" stroke="#273447" stroke-width="2.6" stroke-linecap="butt" fill="none"/><path d="M-2078.8 -265.8L3842.5 -1234.5" stroke="#273447" stroke-width="2.6" stroke-linecap="butt" fill="none"/><path d="M-2074.9 -241.6L3846.4 -1210.4" stroke="#273447" stroke-width="6.4" stroke-linecap="butt" fill="none"/><path d="M-2070.9 -217.5L3850.4 -1186.2" stroke="#273447" stroke-width="2.6" stroke-linecap="butt" fill="none"/><path d="M-2067.0 -193.3L3854.3 -1162.1" stroke="#273447" stroke-width="2.6" stroke-linecap="butt" fill="none"/><path d="M-2063.0 -169.2L3858.3 -1137.9" stroke="#273447" stroke-width="2.6" stroke-linecap="butt" fill="none"/><path d="M-2059.0 -145.0L3862.2 -1113.7" stroke="#273447" stroke-width="4.9" stroke-linecap="butt" fill="none"/><path d="M-2055.1 -120.9L3866.2 -1089.6" stroke="#273447" stroke-width="6.4" stroke-linecap="butt" fill="none"/><path d="M-2051.1 -96.7L3870.1 -1065.4" stroke="#273447" stroke-width="4.9" stroke-linecap="butt" fill="none"/><path d="M-2047.2 -72.6L3874.1 -1041.3" stroke="#273447" stroke-width="4.9" stroke-linecap="butt" fill="none"/><path d="M-2043.2 -48.4L3878.0 -1017.1" stroke="#273447" stroke-width="4.9" stroke-linecap="butt" fill="none"/><path d="M-2039.3 -24.3L3882.0 -993.0" stroke="#273447" stroke-width="4.9" stroke-linecap="butt" fill="none"/><path d="M-2035.3 -0.1L3885.9 -968.8" stroke="#273447" stroke-width="6.4" stroke-linecap="butt" fill="none"/><path d="M-2031.4 24.0L3889.9 -944.7" stroke="#273447" stroke-width="4.9" stroke-linecap="butt" fill="none"/><path d="M-2027.4 48.2L3893.8 -920.5" stroke="#273447" stroke-width="4.9" stroke-linecap="butt" fill="none"/><path d="M-2023.5 72.4L3897.8 -896.4" stroke="#273447" stroke-width="4.9" stroke-linecap="butt" fill="none"/><path d="M-2019.5 96.5L3901.7 -872.2" stroke="#273447" stroke-width="4.9" stroke-linecap="butt" fill="none"/><path d="M-2015.6 120.7L3905.7 -848.1" stroke="#273447" stroke-width="6.4" stroke-linecap="butt" fill="none"/><path d="M-2011.6 144.8L3909.7 -823.9" stroke="#273447" stroke-width="2.6" stroke-linecap="butt" fill="none"/><path d="M-2007.7 169.0L3913.6 -799.8" stroke="#273447" stroke-width="4.9" stroke-linecap="butt" fill="none"/><path d="M-2003.7 193.1L3917.6 -775.6" stroke="#273447" stroke-width="2.6" stroke-linecap="butt" fill="none"/><path d="M-1999.8 217.3L3921.5 -751.4" stroke="#273447" stroke-width="2.6" stroke-linecap="butt" fill="none"/><path d="M-1995.8 241.4L3925.5 -727.3" stroke="#273447" stroke-width="6.4" stroke-linecap="butt" fill="none"/><path d="M-1991.9 265.6L3929.4 -703.1" stroke="#273447" stroke-width="2.6" stroke-linecap="butt" fill="none"/><path d="M-1987.9 289.7L3933.4 -679.0" stroke="#273447" stroke-width="4.9" stroke-linecap="butt" fill="none"/><path d="M-1984.0 313.9L3937.3 -654.8" stroke="#273447" stroke-width="4.9" stroke-linecap="butt" fill="none"/><path d="M-1980.0 338.0L3941.3 -630.7" stroke="#273447" stroke-width="4.9" stroke-linecap="butt" fill="none"/><path d="M-1976.1 362.2L3945.2 -606.5" stroke="#273447" stroke-width="6.4" stroke-linecap="butt" fill="none"/><path d="M-1972.1 386.4L3949.2 -582.4" stroke="#273447" stroke-width="4.9" stroke-linecap="butt" fill="none"/><path d="M-1968.2 410.5L3953.1 -558.2" stroke="#273447" stroke-width="4.9" stroke-linecap="butt" fill="none"/><path d="M-1964.2 434.7L3957.1 -534.1" stroke="#273447" stroke-width="4.9" stroke-linecap="butt" fill="none"/><path d="M-1960.3 458.8L3961.0 -509.9" stroke="#273447" stroke-width="2.6" stroke-linecap="butt" fill="none"/><path d="M-1956.3 483.0L3965.0 -485.8" stroke="#273447" stroke-width="6.4" stroke-linecap="butt" fill="none"/><path d="M-1952.4 507.1L3968.9 -461.6" stroke="#273447" stroke-width="2.6" stroke-linecap="butt" fill="none"/><path d="M-1948.4 531.3L3972.9 -437.4" stroke="#273447" stroke-width="4.9" stroke-linecap="butt" fill="none"/><path d="M-1944.5 555.4L3976.8 -413.3" stroke="#273447" stroke-width="4.9" stroke-linecap="butt" fill="none"/><path d="M-1940.5 579.6L3980.8 -389.1" stroke="#273447" stroke-width="4.9" stroke-linecap="butt" fill="none"/><path d="M-1936.6 603.7L3984.7 -365.0" stroke="#273447" stroke-width="6.4" stroke-linecap="butt" fill="none"/><path d="M-1932.6 627.9L3988.7 -340.8" stroke="#273447" stroke-width="4.9" stroke-linecap="butt" fill="none"/><path d="M-1928.6 652.0L3992.6 -316.7" stroke="#273447" stroke-width="4.9" stroke-linecap="butt" fill="none"/><path d="M-1924.7 676.2L3996.6 -292.5" stroke="#273447" stroke-width="2.6" stroke-linecap="butt" fill="none"/><path d="M-1920.7 700.3L4000.5 -268.4" stroke="#273447" stroke-width="4.9" stroke-linecap="butt" fill="none"/><path d="M-1916.8 724.5L4004.5 -244.2" stroke="#273447" stroke-width="6.4" stroke-linecap="butt" fill="none"/><path d="M-1912.8 748.7L4008.4 -220.1" stroke="#273447" stroke-width="4.9" stroke-linecap="butt" fill="none"/><path d="M-1908.9 772.8L4012.4 -195.9" stroke="#273447" stroke-width="4.9" stroke-linecap="butt" fill="none"/><path d="M-1904.9 797.0L4016.3 -171.8" stroke="#273447" stroke-width="4.9" stroke-linecap="butt" fill="none"/><path d="M-1901.0 821.1L4020.3 -147.6" stroke="#273447" stroke-width="4.9" stroke-linecap="butt" fill="none"/><path d="M-1897.0 845.3L4024.2 -123.5" stroke="#273447" stroke-width="6.4" stroke-linecap="butt" fill="none"/><path d="M-1893.1 869.4L4028.2 -99.3" stroke="#273447" stroke-width="4.9" stroke-linecap="butt" fill="none"/><path d="M-1889.1 893.6L4032.1 -75.1" stroke="#273447" stroke-width="2.6" stroke-linecap="butt" fill="none"/><path d="M-1885.2 917.7L4036.1 -51.0" stroke="#273447" stroke-width="2.6" stroke-linecap="butt" fill="none"/><path d="M-1881.2 941.9L4040.1 -26.8" stroke="#273447" stroke-width="4.9" stroke-linecap="butt" fill="none"/><path d="M-1877.3 966.0L4044.0 -2.7" stroke="#273447" stroke-width="6.4" stroke-linecap="butt" fill="none"/><path d="M-1873.3 990.2L4048.0 21.5" stroke="#273447" stroke-width="4.9" stroke-linecap="butt" fill="none"/><path d="M-1869.4 1014.3L4051.9 45.6" stroke="#273447" stroke-width="2.6" stroke-linecap="butt" fill="none"/><path d="M-1865.4 1038.5L4055.9 69.8" stroke="#273447" stroke-width="5.6" stroke-linecap="butt" fill="none"/><path d="M-1861.5 1062.7L4059.8 93.9" stroke="#273447" stroke-width="4.9" stroke-linecap="butt" fill="none"/><path d="M-1857.5 1086.8L4063.8 118.1" stroke="#273447" stroke-width="6.4" stroke-linecap="butt" fill="none"/><path d="M-1853.6 1111.0L4067.7 142.2" stroke="#273447" stroke-width="4.9" stroke-linecap="butt" fill="none"/><path d="M-1849.6 1135.1L4071.7 166.4" stroke="#273447" stroke-width="4.9" stroke-linecap="butt" fill="none"/><path d="M-1845.7 1159.3L4075.6 190.5" stroke="#273447" stroke-width="4.9" stroke-linecap="butt" fill="none"/><path d="M-1841.7 1183.4L4079.6 214.7" stroke="#273447" stroke-width="2.6" stroke-linecap="butt" fill="none"/><path d="M-1837.8 1207.6L4083.5 238.9" stroke="#273447" stroke-width="6.4" stroke-linecap="butt" fill="none"/><path d="M-1833.8 1231.7L4087.5 263.0" stroke="#273447" stroke-width="2.6" stroke-linecap="butt" fill="none"/><path d="M-1829.9 1255.9L4091.4 287.2" stroke="#273447" stroke-width="4.9" stroke-linecap="butt" fill="none"/><path d="M-1825.9 1280.0L4095.4 311.3" stroke="#273447" stroke-width="2.6" stroke-linecap="butt" fill="none"/><path d="M-1822.0 1304.2L4099.3 335.5" stroke="#273447" stroke-width="2.6" stroke-linecap="butt" fill="none"/><path d="M-1818.0 1328.3L4103.3 359.6" stroke="#273447" stroke-width="6.4" stroke-linecap="butt" fill="none"/><path d="M-1814.1 1352.5L4107.2 383.8" stroke="#273447" stroke-width="4.9" stroke-linecap="butt" fill="none"/><path d="M-1810.1 1376.6L4111.2 407.9" stroke="#273447" stroke-width="4.9" stroke-linecap="butt" fill="none"/><path d="M-1806.2 1400.8L4115.1 432.1" stroke="#273447" stroke-width="4.9" stroke-linecap="butt" fill="none"/><path d="M-1802.2 1425.0L4119.1 456.2" stroke="#273447" stroke-width="4.9" stroke-linecap="butt" fill="none"/><path d="M-1798.2 1449.1L4123.0 480.4" stroke="#273447" stroke-width="6.4" stroke-linecap="butt" fill="none"/><path d="M-1794.3 1473.3L4127.0 504.5" stroke="#273447" stroke-width="4.9" stroke-linecap="butt" fill="none"/><path d="M-1790.3 1497.4L4130.9 528.7" stroke="#273447" stroke-width="2.6" stroke-linecap="butt" fill="none"/><path d="M-1786.4 1521.6L4134.9 552.8" stroke="#273447" stroke-width="4.9" stroke-linecap="butt" fill="none"/><path d="M-1782.4 1545.7L4138.8 577.0" stroke="#273447" stroke-width="4.9" stroke-linecap="butt" fill="none"/><path d="M-1778.5 1569.9L4142.8 601.2" stroke="#273447" stroke-width="6.4" stroke-linecap="butt" fill="none"/><path d="M-1774.5 1594.0L4146.7 625.3" stroke="#273447" stroke-width="2.6" stroke-linecap="butt" fill="none"/><path d="M-1770.6 1618.2L4150.7 649.5" stroke="#273447" stroke-width="4.9" stroke-linecap="butt" fill="none"/><path d="M-1766.6 1642.3L4154.6 673.6" stroke="#273447" stroke-width="2.6" stroke-linecap="butt" fill="none"/><path d="M-1762.7 1666.5L4158.6 697.8" stroke="#273447" stroke-width="2.6" stroke-linecap="butt" fill="none"/><path d="M-1758.7 1690.6L4162.5 721.9" stroke="#273447" stroke-width="6.4" stroke-linecap="butt" fill="none"/><path d="M-1754.8 1714.8L4166.5 746.1" stroke="#273447" stroke-width="4.9" stroke-linecap="butt" fill="none"/><path d="M-1750.8 1739.0L4170.5 770.2" stroke="#273447" stroke-width="4.9" stroke-linecap="butt" fill="none"/><path d="M-1746.9 1763.1L4174.4 794.4" stroke="#273447" stroke-width="4.9" stroke-linecap="butt" fill="none"/><path d="M-1742.9 1787.3L4178.4 818.5" stroke="#273447" stroke-width="4.9" stroke-linecap="butt" fill="none"/><path d="M-1739.0 1811.4L4182.3 842.7" stroke="#273447" stroke-width="6.4" stroke-linecap="butt" fill="none"/><path d="M-1735.0 1835.6L4186.3 866.8" stroke="#273447" stroke-width="4.9" stroke-linecap="butt" fill="none"/><path d="M-1731.1 1859.7L4190.2 891.0" stroke="#273447" stroke-width="4.9" stroke-linecap="butt" fill="none"/><path d="M-1727.1 1883.9L4194.2 915.2" stroke="#273447" stroke-width="4.9" stroke-linecap="butt" fill="none"/><path d="M-1723.2 1908.0L4198.1 939.3" stroke="#273447" stroke-width="4.9" stroke-linecap="butt" fill="none"/><path d="M-1719.2 1932.2L4202.1 963.5" stroke="#273447" stroke-width="6.4" stroke-linecap="butt" fill="none"/><path d="M-1715.3 1956.3L4206.0 987.6" stroke="#273447" stroke-width="2.6" stroke-linecap="butt" fill="none"/><path d="M-1711.3 1980.5L4210.0 1011.8" stroke="#273447" stroke-width="4.9" stroke-linecap="butt" fill="none"/><path d="M-1707.4 2004.6L4213.9 1035.9" stroke="#273447" stroke-width="4.9" stroke-linecap="butt" fill="none"/><path d="M-1703.4 2028.8L4217.9 1060.1" stroke="#273447" stroke-width="4.9" stroke-linecap="butt" fill="none"/><path d="M-1699.5 2052.9L4221.8 1084.2" stroke="#273447" stroke-width="6.4" stroke-linecap="butt" fill="none"/><path d="M-1695.5 2077.1L4225.8 1108.4" stroke="#273447" stroke-width="2.6" stroke-linecap="butt" fill="none"/><path d="M-1691.6 2101.3L4229.7 1132.5" stroke="#273447" stroke-width="4.9" stroke-linecap="butt" fill="none"/><path d="M-1687.6 2125.4L4233.7 1156.7" stroke="#273447" stroke-width="2.6" stroke-linecap="butt" fill="none"/><path d="M-1683.7 2149.6L4237.6 1180.8" stroke="#273447" stroke-width="4.9" stroke-linecap="butt" fill="none"/><path d="M-1679.7 2173.7L4241.6 1205.0" stroke="#273447" stroke-width="6.4" stroke-linecap="butt" fill="none"/><path d="M-1675.8 2197.9L4245.5 1229.1" stroke="#273447" stroke-width="4.9" stroke-linecap="butt" fill="none"/><path d="M-1671.8 2222.0L4249.5 1253.3" stroke="#273447" stroke-width="4.9" stroke-linecap="butt" fill="none"/><path d="M-1667.8 2246.2L4253.4 1277.5" stroke="#273447" stroke-width="4.9" stroke-linecap="butt" fill="none"/><path d="M-1663.9 2270.3L4257.4 1301.6" stroke="#273447" stroke-width="4.9" stroke-linecap="butt" fill="none"/><path d="M-1659.9 2294.5L4261.3 1325.8" stroke="#273447" stroke-width="6.4" stroke-linecap="butt" fill="none"/><path d="M-1656.0 2318.6L4265.3 1349.9" stroke="#273447" stroke-width="4.9" stroke-linecap="butt" fill="none"/><path d="M-1652.0 2342.8L4269.2 1374.1" stroke="#273447" stroke-width="4.9" stroke-linecap="butt" fill="none"/><path d="M-1648.1 2366.9L4273.2 1398.2" stroke="#273447" stroke-width="4.9" stroke-linecap="butt" fill="none"/><path d="M-1644.1 2391.1L4277.1 1422.4" stroke="#273447" stroke-width="4.9" stroke-linecap="butt" fill="none"/><path d="M-1640.2 2415.2L4281.1 1446.5" stroke="#273447" stroke-width="6.4" stroke-linecap="butt" fill="none"/><path d="M-1636.2 2439.4L4285.0 1470.7" stroke="#273447" stroke-width="4.9" stroke-linecap="butt" fill="none"/><path d="M-1632.3 2463.6L4289.0 1494.8" stroke="#273447" stroke-width="4.9" stroke-linecap="butt" fill="none"/><path d="M-1628.3 2487.7L4292.9 1519.0" stroke="#273447" stroke-width="4.9" stroke-linecap="butt" fill="none"/><path d="M-1624.4 2511.9L4296.9 1543.1" stroke="#273447" stroke-width="4.9" stroke-linecap="butt" fill="none"/><path d="M-1620.4 2536.0L4300.9 1567.3" stroke="#273447" stroke-width="6.4" stroke-linecap="butt" fill="none"/><path d="M-884.5 -2112.3L84.2 3809.0" stroke="#273447" stroke-width="2.2" stroke-linecap="butt" fill="none"/><path d="M-851.1 -2117.7L117.6 3803.6" stroke="#273447" stroke-width="2.2" stroke-linecap="butt" fill="none"/><path d="M-817.7 -2123.2L151.0 3798.1" stroke="#273447" stroke-width="2.2" stroke-linecap="butt" fill="none"/><path d="M-784.3 -2128.7L184.4 3792.6" stroke="#273447" stroke-width="5" stroke-linecap="butt" fill="none"/><path d="M-750.9 -2134.1L217.8 3787.2" stroke="#273447" stroke-width="2.2" stroke-linecap="butt" fill="none"/><path d="M-717.5 -2139.6L251.2 3781.7" stroke="#273447" stroke-width="5" stroke-linecap="butt" fill="none"/><path d="M-684.1 -2145.1L284.7 3776.2" stroke="#273447" stroke-width="5" stroke-linecap="butt" fill="none"/><path d="M-650.7 -2150.5L318.1 3770.8" stroke="#273447" stroke-width="2.2" stroke-linecap="butt" fill="none"/><path d="M-617.3 -2156.0L351.5 3765.3" stroke="#273447" stroke-width="2.2" stroke-linecap="butt" fill="none"/><path d="M-583.9 -2161.4L384.9 3759.8" stroke="#273447" stroke-width="2.2" stroke-linecap="butt" fill="none"/><path d="M-550.4 -2166.9L418.3 3754.4" stroke="#273447" stroke-width="2.2" stroke-linecap="butt" fill="none"/><path d="M-517.0 -2172.4L451.7 3748.9" stroke="#273447" stroke-width="2.2" stroke-linecap="butt" fill="none"/><path d="M-483.6 -2177.8L485.1 3743.4" stroke="#273447" stroke-width="2.2" stroke-linecap="butt" fill="none"/><path d="M-450.2 -2183.3L518.5 3738.0" stroke="#273447" stroke-width="2.2" stroke-linecap="butt" fill="none"/><path d="M-416.8 -2188.8L551.9 3732.5" stroke="#273447" stroke-width="2.2" stroke-linecap="butt" fill="none"/><path d="M-383.4 -2194.2L585.3 3727.0" stroke="#273447" stroke-width="2.2" stroke-linecap="butt" fill="none"/><path d="M-350.0 -2199.7L618.7 3721.6" stroke="#273447" stroke-width="2.2" stroke-linecap="butt" fill="none"/><path d="M-316.6 -2205.2L652.1 3716.1" stroke="#273447" stroke-width="2.2" stroke-linecap="butt" fill="none"/><path d="M-283.2 -2210.6L685.5 3710.6" stroke="#273447" stroke-width="2.2" stroke-linecap="butt" fill="none"/><path d="M-249.8 -2216.1L718.9 3705.2" stroke="#273447" stroke-width="2.2" stroke-linecap="butt" fill="none"/><path d="M-216.4 -2221.6L752.3 3699.7" stroke="#273447" stroke-width="2.2" stroke-linecap="butt" fill="none"/><path d="M-183.0 -2227.0L785.7 3694.3" stroke="#273447" stroke-width="2.2" stroke-linecap="butt" fill="none"/><path d="M-149.6 -2232.5L819.1 3688.8" stroke="#273447" stroke-width="2.2" stroke-linecap="butt" fill="none"/><path d="M-116.2 -2238.0L852.6 3683.3" stroke="#273447" stroke-width="2.2" stroke-linecap="butt" fill="none"/><path d="M-82.8 -2243.4L886.0 3677.9" stroke="#273447" stroke-width="5" stroke-linecap="butt" fill="none"/><path d="M-49.4 -2248.9L919.4 3672.4" stroke="#273447" stroke-width="2.2" stroke-linecap="butt" fill="none"/><path d="M-16.0 -2254.4L952.8 3666.9" stroke="#273447" stroke-width="2.2" stroke-linecap="butt" fill="none"/><path d="M17.5 -2259.8L986.2 3661.5" stroke="#273447" stroke-width="2.2" stroke-linecap="butt" fill="none"/><path d="M50.9 -2265.3L1019.6 3656.0" stroke="#273447" stroke-width="5" stroke-linecap="butt" fill="none"/><path d="M84.3 -2270.8L1053.0 3650.5" stroke="#273447" stroke-width="5" stroke-linecap="butt" fill="none"/><path d="M117.7 -2276.2L1086.4 3645.1" stroke="#273447" stroke-width="2.2" stroke-linecap="butt" fill="none"/><path d="M151.1 -2281.7L1119.8 3639.6" stroke="#273447" stroke-width="5" stroke-linecap="butt" fill="none"/><path d="M184.5 -2287.1L1153.2 3634.1" stroke="#273447" stroke-width="5" stroke-linecap="butt" fill="none"/><path d="M217.9 -2292.6L1186.6 3628.7" stroke="#273447" stroke-width="5" stroke-linecap="butt" fill="none"/><path d="M251.3 -2298.1L1220.0 3623.2" stroke="#273447" stroke-width="2.2" stroke-linecap="butt" fill="none"/><path d="M284.7 -2303.5L1253.4 3617.7" stroke="#273447" stroke-width="2.2" stroke-linecap="butt" fill="none"/><path d="M318.1 -2309.0L1286.8 3612.3" stroke="#273447" stroke-width="2.2" stroke-linecap="butt" fill="none"/><path d="M351.5 -2314.5L1320.2 3606.8" stroke="#273447" stroke-width="5" stroke-linecap="butt" fill="none"/><path d="M384.9 -2319.9L1353.6 3601.3" stroke="#273447" stroke-width="6.5" stroke-linecap="butt" fill="none"/><path d="M418.3 -2325.4L1387.0 3595.9" stroke="#273447" stroke-width="2.2" stroke-linecap="butt" fill="none"/><path d="M451.7 -2330.9L1420.5 3590.4" stroke="#273447" stroke-width="2.2" stroke-linecap="butt" fill="none"/><path d="M485.1 -2336.3L1453.9 3584.9" stroke="#273447" stroke-width="5" stroke-linecap="butt" fill="none"/><path d="M518.5 -2341.8L1487.3 3579.5" stroke="#273447" stroke-width="2.2" stroke-linecap="butt" fill="none"/><path d="M551.9 -2347.3L1520.7 3574.0" stroke="#273447" stroke-width="6.5" stroke-linecap="butt" fill="none"/><path d="M585.4 -2352.7L1554.1 3568.6" stroke="#273447" stroke-width="6.5" stroke-linecap="butt" fill="none"/><path d="M618.8 -2358.2L1587.5 3563.1" stroke="#273447" stroke-width="11.5" stroke-linecap="butt" fill="none"/><path d="M652.2 -2363.7L1620.9 3557.6" stroke="#273447" stroke-width="2.6" stroke-linecap="butt" fill="none"/><path d="M685.6 -2369.1L1654.3 3552.2" stroke="#273447" stroke-width="5.3" stroke-linecap="butt" fill="none"/><path d="M719.0 -2374.6L1687.7 3546.7" stroke="#273447" stroke-width="2.6" stroke-linecap="butt" fill="none"/><path d="M752.4 -2380.1L1721.1 3541.2" stroke="#273447" stroke-width="5.3" stroke-linecap="butt" fill="none"/><path d="M785.8 -2385.5L1754.5 3535.8" stroke="#273447" stroke-width="5.3" stroke-linecap="butt" fill="none"/><path d="M819.2 -2391.0L1787.9 3530.3" stroke="#273447" stroke-width="2.6" stroke-linecap="butt" fill="none"/><path d="M852.6 -2396.5L1821.3 3524.8" stroke="#273447" stroke-width="5.3" stroke-linecap="butt" fill="none"/><path d="M886.0 -2401.9L1854.7 3519.4" stroke="#273447" stroke-width="5.3" stroke-linecap="butt" fill="none"/><path d="M919.4 -2407.4L1888.1 3513.9" stroke="#273447" stroke-width="5.3" stroke-linecap="butt" fill="none"/><path d="M952.8 -2412.8L1921.5 3508.4" stroke="#273447" stroke-width="5.3" stroke-linecap="butt" fill="none"/><path d="M986.2 -2418.3L1954.9 3503.0" stroke="#273447" stroke-width="5.3" stroke-linecap="butt" fill="none"/><path d="M1019.6 -2423.8L1988.4 3497.5" stroke="#273447" stroke-width="5.3" stroke-linecap="butt" fill="none"/><path d="M1053.0 -2429.2L2021.8 3492.0" stroke="#273447" stroke-width="5.3" stroke-linecap="butt" fill="none"/><path d="M1086.4 -2434.7L2055.2 3486.6" stroke="#273447" stroke-width="5.3" stroke-linecap="butt" fill="none"/><path d="M1119.8 -2440.2L2088.6 3481.1" stroke="#273447" stroke-width="5.3" stroke-linecap="butt" fill="none"/><path d="M1153.3 -2445.6L2122.0 3475.6" stroke="#273447" stroke-width="5.3" stroke-linecap="butt" fill="none"/><path d="M1186.7 -2451.1L2155.4 3470.2" stroke="#273447" stroke-width="5.3" stroke-linecap="butt" fill="none"/><path d="M1220.1 -2456.6L2188.8 3464.7" stroke="#273447" stroke-width="5.3" stroke-linecap="butt" fill="none"/><path d="M1253.5 -2462.0L2222.2 3459.2" stroke="#273447" stroke-width="5.3" stroke-linecap="butt" fill="none"/><path d="M1286.9 -2467.5L2255.6 3453.8" stroke="#273447" stroke-width="5.3" stroke-linecap="butt" fill="none"/><path d="M1320.3 -2473.0L2289.0 3448.3" stroke="#273447" stroke-width="5.3" stroke-linecap="butt" fill="none"/><path d="M1353.7 -2478.4L2322.4 3442.9" stroke="#273447" stroke-width="5.3" stroke-linecap="butt" fill="none"/><path d="M1387.1 -2483.9L2355.8 3437.4" stroke="#273447" stroke-width="2.6" stroke-linecap="butt" fill="none"/><path d="M1420.5 -2489.4L2389.2 3431.9" stroke="#273447" stroke-width="5.3" stroke-linecap="butt" fill="none"/><path d="M1453.9 -2494.8L2422.6 3426.5" stroke="#273447" stroke-width="2.6" stroke-linecap="butt" fill="none"/><path d="M1487.3 -2500.3L2456.0 3421.0" stroke="#273447" stroke-width="5.3" stroke-linecap="butt" fill="none"/><path d="M1520.7 -2505.8L2489.4 3415.5" stroke="#273447" stroke-width="5.3" stroke-linecap="butt" fill="none"/><path d="M1554.1 -2511.2L2522.8 3410.1" stroke="#273447" stroke-width="5.3" stroke-linecap="butt" fill="none"/><path d="M1587.5 -2516.7L2556.3 3404.6" stroke="#273447" stroke-width="5.3" stroke-linecap="butt" fill="none"/><path d="M1620.9 -2522.2L2589.7 3399.1" stroke="#273447" stroke-width="5.3" stroke-linecap="butt" fill="none"/><path d="M1654.3 -2527.6L2623.1 3393.7" stroke="#273447" stroke-width="5.3" stroke-linecap="butt" fill="none"/><path d="M1687.7 -2533.1L2656.5 3388.2" stroke="#273447" stroke-width="5.3" stroke-linecap="butt" fill="none"/><path d="M1721.2 -2538.5L2689.9 3382.7" stroke="#273447" stroke-width="2.6" stroke-linecap="butt" fill="none"/><path d="M1754.6 -2544.0L2723.3 3377.3" stroke="#273447" stroke-width="5.3" stroke-linecap="butt" fill="none"/><path d="M1788.0 -2549.5L2756.7 3371.8" stroke="#273447" stroke-width="5.3" stroke-linecap="butt" fill="none"/><path d="M1821.4 -2554.9L2790.1 3366.3" stroke="#273447" stroke-width="5.3" stroke-linecap="butt" fill="none"/><path d="M1854.8 -2560.4L2823.5 3360.9" stroke="#273447" stroke-width="2.6" stroke-linecap="butt" fill="none"/><path d="M1888.2 -2565.9L2856.9 3355.4" stroke="#273447" stroke-width="5.3" stroke-linecap="butt" fill="none"/><path d="M1921.6 -2571.3L2890.3 3349.9" stroke="#273447" stroke-width="5.3" stroke-linecap="butt" fill="none"/><path d="M1955.0 -2576.8L2923.7 3344.5" stroke="#273447" stroke-width="5.3" stroke-linecap="butt" fill="none"/><path d="M1988.4 -2582.3L2957.1 3339.0" stroke="#273447" stroke-width="5.3" stroke-linecap="butt" fill="none"/><path d="M2021.8 -2587.7L2990.5 3333.5" stroke="#273447" stroke-width="5.3" stroke-linecap="butt" fill="none"/><path d="M2055.2 -2593.2L3023.9 3328.1" stroke="#273447" stroke-width="5.3" stroke-linecap="butt" fill="none"/><path d="M2088.6 -2598.7L3057.3 3322.6" stroke="#273447" stroke-width="5.3" stroke-linecap="butt" fill="none"/><path d="M2122.0 -2604.1L3090.7 3317.2" stroke="#273447" stroke-width="2.6" stroke-linecap="butt" fill="none"/></g>
<g clip-path="url(#cN)"><path d="M-2068.0 -304.8L3853.3 -1273.5" stroke="#2d3a4d" stroke-width="1.2" stroke-linecap="butt" fill="none"/><path d="M-2060.1 -256.4L3861.2 -1225.2" stroke="#2d3a4d" stroke-width="1.2" stroke-linecap="butt" fill="none"/><path d="M-2052.2 -208.1L3869.1 -1176.9" stroke="#2d3a4d" stroke-width="1.2" stroke-linecap="butt" fill="none"/><path d="M-2048.3 -184.0L3873.0 -1152.7" stroke="#2d3a4d" stroke-width="1.2" stroke-linecap="butt" fill="none"/><path d="M-2036.4 -111.5L3884.9 -1080.2" stroke="#2d3a4d" stroke-width="1.2" stroke-linecap="butt" fill="none"/><path d="M-2032.5 -87.4L3888.8 -1056.1" stroke="#2d3a4d" stroke-width="1.2" stroke-linecap="butt" fill="none"/><path d="M-2028.5 -63.2L3892.8 -1031.9" stroke="#2d3a4d" stroke-width="1.2" stroke-linecap="butt" fill="none"/><path d="M-2024.6 -39.1L3896.7 -1007.8" stroke="#2d3a4d" stroke-width="1.2" stroke-linecap="butt" fill="none"/><path d="M-2020.6 -14.9L3900.7 -983.6" stroke="#2d3a4d" stroke-width="1.2" stroke-linecap="butt" fill="none"/><path d="M-2016.7 9.2L3904.6 -959.5" stroke="#2d3a4d" stroke-width="1.2" stroke-linecap="butt" fill="none"/><path d="M-2012.7 33.4L3908.6 -935.3" stroke="#2d3a4d" stroke-width="1.2" stroke-linecap="butt" fill="none"/><path d="M-2008.8 57.5L3912.5 -911.2" stroke="#2d3a4d" stroke-width="1.2" stroke-linecap="butt" fill="none"/><path d="M-2004.8 81.7L3916.5 -887.0" stroke="#2d3a4d" stroke-width="1.2" stroke-linecap="butt" fill="none"/><path d="M-2000.9 105.9L3920.4 -862.9" stroke="#2d3a4d" stroke-width="1.2" stroke-linecap="butt" fill="none"/><path d="M-1993.0 154.2L3928.3 -814.6" stroke="#2d3a4d" stroke-width="1.2" stroke-linecap="butt" fill="none"/><path d="M-1989.0 178.3L3932.3 -790.4" stroke="#2d3a4d" stroke-width="1.2" stroke-linecap="butt" fill="none"/><path d="M-1985.0 202.5L3936.2 -766.3" stroke="#2d3a4d" stroke-width="1.2" stroke-linecap="butt" fill="none"/><path d="M-1981.1 226.6L3940.2 -742.1" stroke="#2d3a4d" stroke-width="1.2" stroke-linecap="butt" fill="none"/><path d="M-1977.1 250.8L3944.1 -717.9" stroke="#2d3a4d" stroke-width="1.2" stroke-linecap="butt" fill="none"/><path d="M-1973.2 274.9L3948.1 -693.8" stroke="#2d3a4d" stroke-width="1.2" stroke-linecap="butt" fill="none"/><path d="M-1969.2 299.1L3952.0 -669.6" stroke="#2d3a4d" stroke-width="1.2" stroke-linecap="butt" fill="none"/><path d="M-1957.4 371.5L3963.9 -597.2" stroke="#2d3a4d" stroke-width="1.2" stroke-linecap="butt" fill="none"/><path d="M-1953.4 395.7L3967.8 -573.0" stroke="#2d3a4d" stroke-width="1.2" stroke-linecap="butt" fill="none"/><path d="M-1945.5 444.0L3975.7 -524.7" stroke="#2d3a4d" stroke-width="1.2" stroke-linecap="butt" fill="none"/><path d="M-1937.6 492.3L3983.7 -476.4" stroke="#2d3a4d" stroke-width="1.2" stroke-linecap="butt" fill="none"/><path d="M-1933.7 516.5L3987.6 -452.3" stroke="#2d3a4d" stroke-width="1.2" stroke-linecap="butt" fill="none"/><path d="M-1925.8 564.8L3995.5 -404.0" stroke="#2d3a4d" stroke-width="1.2" stroke-linecap="butt" fill="none"/><path d="M-1921.8 588.9L3999.5 -379.8" stroke="#2d3a4d" stroke-width="1.2" stroke-linecap="butt" fill="none"/><path d="M-1910.0 661.4L4011.3 -307.3" stroke="#2d3a4d" stroke-width="1.2" stroke-linecap="butt" fill="none"/><path d="M-1894.2 758.0L4027.1 -210.7" stroke="#2d3a4d" stroke-width="1.2" stroke-linecap="butt" fill="none"/><path d="M-1890.2 782.2L4031.1 -186.6" stroke="#2d3a4d" stroke-width="1.2" stroke-linecap="butt" fill="none"/><path d="M-1886.3 806.3L4035.0 -162.4" stroke="#2d3a4d" stroke-width="1.2" stroke-linecap="butt" fill="none"/><path d="M-1882.3 830.5L4039.0 -138.3" stroke="#2d3a4d" stroke-width="1.2" stroke-linecap="butt" fill="none"/><path d="M-1878.4 854.6L4042.9 -114.1" stroke="#2d3a4d" stroke-width="1.2" stroke-linecap="butt" fill="none"/><path d="M-1870.5 902.9L4050.8 -65.8" stroke="#2d3a4d" stroke-width="1.2" stroke-linecap="butt" fill="none"/><path d="M-1866.5 927.1L4054.8 -41.6" stroke="#2d3a4d" stroke-width="1.2" stroke-linecap="butt" fill="none"/><path d="M-1862.6 951.2L4058.7 -17.5" stroke="#2d3a4d" stroke-width="1.2" stroke-linecap="butt" fill="none"/><path d="M-1846.7 1047.8L4074.5 79.1" stroke="#2d3a4d" stroke-width="1.2" stroke-linecap="butt" fill="none"/><path d="M-1842.8 1072.0L4078.5 103.3" stroke="#2d3a4d" stroke-width="1.2" stroke-linecap="butt" fill="none"/><path d="M-1838.8 1096.1L4082.4 127.4" stroke="#2d3a4d" stroke-width="1.2" stroke-linecap="butt" fill="none"/><path d="M-1834.9 1120.3L4086.4 151.6" stroke="#2d3a4d" stroke-width="1.2" stroke-linecap="butt" fill="none"/><path d="M-1830.9 1144.5L4090.3 175.7" stroke="#2d3a4d" stroke-width="1.2" stroke-linecap="butt" fill="none"/><path d="M-1827.0 1168.6L4094.3 199.9" stroke="#2d3a4d" stroke-width="1.2" stroke-linecap="butt" fill="none"/><path d="M-1823.0 1192.8L4098.2 224.0" stroke="#2d3a4d" stroke-width="1.2" stroke-linecap="butt" fill="none"/><path d="M-1811.2 1265.2L4110.1 296.5" stroke="#2d3a4d" stroke-width="1.2" stroke-linecap="butt" fill="none"/><path d="M-1807.2 1289.4L4114.1 320.7" stroke="#2d3a4d" stroke-width="1.2" stroke-linecap="butt" fill="none"/><path d="M-1799.3 1337.7L4122.0 369.0" stroke="#2d3a4d" stroke-width="1.2" stroke-linecap="butt" fill="none"/><path d="M-1795.4 1361.8L4125.9 393.1" stroke="#2d3a4d" stroke-width="1.2" stroke-linecap="butt" fill="none"/><path d="M-1791.4 1386.0L4129.9 417.3" stroke="#2d3a4d" stroke-width="1.2" stroke-linecap="butt" fill="none"/><path d="M-1787.5 1410.1L4133.8 441.4" stroke="#2d3a4d" stroke-width="1.2" stroke-linecap="butt" fill="none"/><path d="M-1783.5 1434.3L4137.8 465.6" stroke="#2d3a4d" stroke-width="1.2" stroke-linecap="butt" fill="none"/><path d="M-1779.6 1458.5L4141.7 489.7" stroke="#2d3a4d" stroke-width="1.2" stroke-linecap="butt" fill="none"/><path d="M-1775.6 1482.6L4145.7 513.9" stroke="#2d3a4d" stroke-width="1.2" stroke-linecap="butt" fill="none"/><path d="M-1771.7 1506.8L4149.6 538.0" stroke="#2d3a4d" stroke-width="1.2" stroke-linecap="butt" fill="none"/><path d="M-1767.7 1530.9L4153.6 562.2" stroke="#2d3a4d" stroke-width="1.2" stroke-linecap="butt" fill="none"/><path d="M-1763.8 1555.1L4157.5 586.3" stroke="#2d3a4d" stroke-width="1.2" stroke-linecap="butt" fill="none"/><path d="M-1759.8 1579.2L4161.5 610.5" stroke="#2d3a4d" stroke-width="1.2" stroke-linecap="butt" fill="none"/><path d="M-1755.9 1603.4L4165.4 634.7" stroke="#2d3a4d" stroke-width="1.2" stroke-linecap="butt" fill="none"/><path d="M-1751.9 1627.5L4169.4 658.8" stroke="#2d3a4d" stroke-width="1.2" stroke-linecap="butt" fill="none"/><path d="M-1748.0 1651.7L4173.3 683.0" stroke="#2d3a4d" stroke-width="1.2" stroke-linecap="butt" fill="none"/><path d="M-1744.0 1675.8L4177.3 707.1" stroke="#2d3a4d" stroke-width="1.2" stroke-linecap="butt" fill="none"/><path d="M-1740.1 1700.0L4181.2 731.3" stroke="#2d3a4d" stroke-width="1.2" stroke-linecap="butt" fill="none"/><path d="M-1732.2 1748.3L4189.1 779.6" stroke="#2d3a4d" stroke-width="1.2" stroke-linecap="butt" fill="none"/><path d="M-1712.4 1869.1L4208.9 900.3" stroke="#2d3a4d" stroke-width="1.2" stroke-linecap="butt" fill="none"/><path d="M-1708.4 1893.2L4212.8 924.5" stroke="#2d3a4d" stroke-width="1.2" stroke-linecap="butt" fill="none"/><path d="M-1700.5 1941.5L4220.7 972.8" stroke="#2d3a4d" stroke-width="1.2" stroke-linecap="butt" fill="none"/><path d="M-1688.7 2014.0L4232.6 1045.3" stroke="#2d3a4d" stroke-width="1.2" stroke-linecap="butt" fill="none"/><path d="M-1665.0 2158.9L4256.3 1190.2" stroke="#2d3a4d" stroke-width="1.2" stroke-linecap="butt" fill="none"/><path d="M-1661.0 2183.1L4260.3 1214.3" stroke="#2d3a4d" stroke-width="1.2" stroke-linecap="butt" fill="none"/><path d="M-1657.1 2207.2L4264.2 1238.5" stroke="#2d3a4d" stroke-width="1.2" stroke-linecap="butt" fill="none"/><path d="M-1625.5 2400.4L4295.8 1431.7" stroke="#2d3a4d" stroke-width="1.2" stroke-linecap="butt" fill="none"/><path d="M-1621.5 2424.6L4299.8 1455.9" stroke="#2d3a4d" stroke-width="1.2" stroke-linecap="butt" fill="none"/><path d="M-1617.6 2448.7L4303.7 1480.0" stroke="#2d3a4d" stroke-width="1.2" stroke-linecap="butt" fill="none"/><path d="M-1613.6 2472.9L4307.7 1504.2" stroke="#2d3a4d" stroke-width="1.2" stroke-linecap="butt" fill="none"/><path d="M-1609.7 2497.1L4311.6 1528.3" stroke="#2d3a4d" stroke-width="1.2" stroke-linecap="butt" fill="none"/><path d="M-732.2 -2124.8L236.5 3796.5" stroke="#2d3a4d" stroke-width="1.2" stroke-linecap="butt" fill="none"/><path d="M-531.8 -2157.6L437.0 3763.7" stroke="#2d3a4d" stroke-width="1.2" stroke-linecap="butt" fill="none"/><path d="M-465.0 -2168.5L503.8 3752.8" stroke="#2d3a4d" stroke-width="1.2" stroke-linecap="butt" fill="none"/><path d="M-431.6 -2174.0L537.2 3747.3" stroke="#2d3a4d" stroke-width="1.2" stroke-linecap="butt" fill="none"/><path d="M-398.1 -2179.4L570.6 3741.9" stroke="#2d3a4d" stroke-width="1.2" stroke-linecap="butt" fill="none"/><path d="M-331.3 -2190.4L637.4 3730.9" stroke="#2d3a4d" stroke-width="1.2" stroke-linecap="butt" fill="none"/><path d="M2.7 -2245.0L971.4 3676.3" stroke="#2d3a4d" stroke-width="1.2" stroke-linecap="butt" fill="none"/><path d="M36.1 -2250.5L1004.9 3670.8" stroke="#2d3a4d" stroke-width="1.2" stroke-linecap="butt" fill="none"/><path d="M69.5 -2255.9L1038.3 3665.3" stroke="#2d3a4d" stroke-width="1.2" stroke-linecap="butt" fill="none"/><path d="M203.2 -2277.8L1171.9 3643.5" stroke="#2d3a4d" stroke-width="1.2" stroke-linecap="butt" fill="none"/><path d="M236.6 -2283.3L1205.3 3638.0" stroke="#2d3a4d" stroke-width="1.2" stroke-linecap="butt" fill="none"/><path d="M270.0 -2288.7L1238.7 3632.5" stroke="#2d3a4d" stroke-width="1.2" stroke-linecap="butt" fill="none"/><path d="M403.6 -2310.6L1372.3 3610.7" stroke="#2d3a4d" stroke-width="1.2" stroke-linecap="butt" fill="none"/><path d="M537.2 -2332.5L1505.9 3588.8" stroke="#2d3a4d" stroke-width="1.2" stroke-linecap="butt" fill="none"/><path d="M604.0 -2343.4L1572.8 3577.9" stroke="#2d3a4d" stroke-width="1.2" stroke-linecap="butt" fill="none"/><path d="M704.2 -2359.8L1673.0 3561.5" stroke="#2d3a4d" stroke-width="1.2" stroke-linecap="butt" fill="none"/><path d="M871.3 -2387.1L1840.0 3534.2" stroke="#2d3a4d" stroke-width="1.2" stroke-linecap="butt" fill="none"/><path d="M904.7 -2392.6L1873.4 3528.7" stroke="#2d3a4d" stroke-width="1.2" stroke-linecap="butt" fill="none"/><path d="M971.5 -2403.5L1940.2 3517.8" stroke="#2d3a4d" stroke-width="1.2" stroke-linecap="butt" fill="none"/><path d="M1038.3 -2414.4L2007.0 3506.8" stroke="#2d3a4d" stroke-width="1.2" stroke-linecap="butt" fill="none"/><path d="M1138.5 -2430.8L2107.2 3490.5" stroke="#2d3a4d" stroke-width="1.2" stroke-linecap="butt" fill="none"/><path d="M1305.6 -2458.2L2274.3 3463.1" stroke="#2d3a4d" stroke-width="1.2" stroke-linecap="butt" fill="none"/><path d="M1405.8 -2474.6L2374.5 3446.7" stroke="#2d3a4d" stroke-width="1.2" stroke-linecap="butt" fill="none"/><path d="M1439.2 -2480.0L2407.9 3441.3" stroke="#2d3a4d" stroke-width="1.2" stroke-linecap="butt" fill="none"/><path d="M1572.8 -2501.9L2541.5 3419.4" stroke="#2d3a4d" stroke-width="1.2" stroke-linecap="butt" fill="none"/><path d="M1706.4 -2523.7L2675.1 3397.5" stroke="#2d3a4d" stroke-width="1.2" stroke-linecap="butt" fill="none"/><path d="M1806.6 -2540.1L2775.4 3381.1" stroke="#2d3a4d" stroke-width="1.2" stroke-linecap="butt" fill="none"/><path d="M1940.3 -2562.0L2909.0 3359.3" stroke="#2d3a4d" stroke-width="1.2" stroke-linecap="butt" fill="none"/></g>
<polygon points="860.0,200.0 900.0,190.0 898.0,165.0 947.0,146.0 982.0,136.0 1015.0,140.0 1022.0,155.0 1036.0,169.0 1040.0,240.0 909.0,263.0 905.0,217.0 860.0,222.0" fill="#384658" />
<path d="M860 220L905 216.500L909 262L1036 242" stroke="#273447" stroke-width="6" fill="none" stroke-linejoin="round" />
<path d="M1036 170L1038 240" stroke="#273447" stroke-width="3" fill="none" stroke-linejoin="round" />
<path d="M955 168L975 230L1010 226L1000 170" stroke="#2f3c4f" stroke-width="1.2" fill="none" stroke-linejoin="round" />
<g clip-path="url(#cS)"><path d="M-744.1 2966.5L3498.5 -1276.1" stroke="#273447" stroke-width="5.5" stroke-linecap="butt" fill="none"/><path d="M-712.0 2998.7L3530.7 -1244.0" stroke="#273447" stroke-width="5.5" stroke-linecap="butt" fill="none"/><path d="M-679.8 3030.8L3562.8 -1211.8" stroke="#273447" stroke-width="5.5" stroke-linecap="butt" fill="none"/><path d="M-647.6 3063.0L3595.0 -1179.6" stroke="#273447" stroke-width="5.5" stroke-linecap="butt" fill="none"/><path d="M-615.5 3095.2L3627.2 -1147.5" stroke="#273447" stroke-width="5.5" stroke-linecap="butt" fill="none"/><path d="M-583.3 3127.4L3659.4 -1115.3" stroke="#273447" stroke-width="5.5" stroke-linecap="butt" fill="none"/><path d="M-551.1 3159.5L3691.5 -1083.1" stroke="#273447" stroke-width="5.5" stroke-linecap="butt" fill="none"/><path d="M-518.9 3191.7L3723.7 -1050.9" stroke="#273447" stroke-width="5.5" stroke-linecap="butt" fill="none"/><path d="M-486.8 3223.9L3755.9 -1018.8" stroke="#273447" stroke-width="5.5" stroke-linecap="butt" fill="none"/><path d="M-454.6 3256.1L3788.1 -986.6" stroke="#273447" stroke-width="5.5" stroke-linecap="butt" fill="none"/><path d="M-422.4 3288.2L3820.2 -954.4" stroke="#273447" stroke-width="5.5" stroke-linecap="butt" fill="none"/><path d="M-390.2 3320.4L3852.4 -922.2" stroke="#273447" stroke-width="5.5" stroke-linecap="butt" fill="none"/><path d="M-358.1 3352.6L3884.6 -890.1" stroke="#273447" stroke-width="5.5" stroke-linecap="butt" fill="none"/><path d="M-325.9 3384.7L3916.7 -857.9" stroke="#273447" stroke-width="5.5" stroke-linecap="butt" fill="none"/><path d="M-1378.3 -706.3L2864.3 3536.3" stroke="#273447" stroke-width="5.5" stroke-linecap="butt" fill="none"/><path d="M-1335.3 -749.3L2907.3 3493.3" stroke="#273447" stroke-width="5.5" stroke-linecap="butt" fill="none"/><path d="M-1292.3 -792.3L2950.3 3450.3" stroke="#273447" stroke-width="5.5" stroke-linecap="butt" fill="none"/><path d="M-1249.3 -835.3L2993.3 3407.3" stroke="#273447" stroke-width="5.5" stroke-linecap="butt" fill="none"/><path d="M-1206.3 -878.3L3036.3 3364.3" stroke="#273447" stroke-width="5.5" stroke-linecap="butt" fill="none"/><path d="M-1163.3 -921.3L3079.3 3321.3" stroke="#273447" stroke-width="5.5" stroke-linecap="butt" fill="none"/><path d="M-1120.3 -964.3L3122.3 3278.3" stroke="#273447" stroke-width="5.5" stroke-linecap="butt" fill="none"/><path d="M-1077.3 -1007.3L3165.3 3235.3" stroke="#273447" stroke-width="5.5" stroke-linecap="butt" fill="none"/><path d="M-1034.3 -1050.3L3208.3 3192.3" stroke="#273447" stroke-width="5.5" stroke-linecap="butt" fill="none"/><path d="M-991.3 -1093.3L3251.3 3149.3" stroke="#273447" stroke-width="5.5" stroke-linecap="butt" fill="none"/><path d="M-948.3 -1136.3L3294.3 3106.3" stroke="#273447" stroke-width="5.5" stroke-linecap="butt" fill="none"/><path d="M-905.3 -1179.3L3337.3 3063.3" stroke="#273447" stroke-width="5.5" stroke-linecap="butt" fill="none"/><path d="M-862.3 -1222.3L3380.3 3020.3" stroke="#273447" stroke-width="5.5" stroke-linecap="butt" fill="none"/><path d="M-819.3 -1265.3L3423.3 2977.3" stroke="#273447" stroke-width="5.5" stroke-linecap="butt" fill="none"/><path d="M-776.3 -1308.3L3466.3 2934.3" stroke="#273447" stroke-width="5.5" stroke-linecap="butt" fill="none"/><path d="M-733.3 -1351.3L3509.3 2891.3" stroke="#273447" stroke-width="5.5" stroke-linecap="butt" fill="none"/><path d="M-690.3 -1394.3L3552.3 2848.3" stroke="#273447" stroke-width="5.5" stroke-linecap="butt" fill="none"/><path d="M-647.3 -1437.3L3595.3 2805.3" stroke="#273447" stroke-width="5.5" stroke-linecap="butt" fill="none"/><path d="M-604.3 -1480.3L3638.3 2762.3" stroke="#273447" stroke-width="5.5" stroke-linecap="butt" fill="none"/><path d="M-561.3 -1523.3L3681.3 2719.3" stroke="#273447" stroke-width="5.5" stroke-linecap="butt" fill="none"/><path d="M-518.3 -1566.3L3724.3 2676.3" stroke="#273447" stroke-width="5.5" stroke-linecap="butt" fill="none"/><path d="M-475.3 -1609.3L3767.3 2633.3" stroke="#273447" stroke-width="5.5" stroke-linecap="butt" fill="none"/><path d="M-432.3 -1652.3L3810.3 2590.3" stroke="#273447" stroke-width="5.5" stroke-linecap="butt" fill="none"/><path d="M-389.3 -1695.3L3853.3 2547.3" stroke="#273447" stroke-width="5.5" stroke-linecap="butt" fill="none"/><path d="M-346.3 -1738.3L3896.3 2504.3" stroke="#273447" stroke-width="5.5" stroke-linecap="butt" fill="none"/><path d="M-303.3 -1781.3L3939.3 2461.3" stroke="#273447" stroke-width="5.5" stroke-linecap="butt" fill="none"/><path d="M-260.3 -1824.3L3982.3 2418.3" stroke="#273447" stroke-width="5.5" stroke-linecap="butt" fill="none"/><path d="M-217.3 -1867.3L4025.3 2375.3" stroke="#273447" stroke-width="5.5" stroke-linecap="butt" fill="none"/><path d="M-174.3 -1910.3L4068.3 2332.3" stroke="#273447" stroke-width="5.5" stroke-linecap="butt" fill="none"/></g>
<g clip-path="url(#cS)"><path d="M-760.2 2950.4L3482.4 -1292.2" stroke="#2d3a4d" stroke-width="1.3" stroke-linecap="butt" fill="none"/><path d="M-728.1 2982.6L3514.6 -1260.1" stroke="#2d3a4d" stroke-width="1.3" stroke-linecap="butt" fill="none"/><path d="M-695.9 3014.8L3546.8 -1227.9" stroke="#2d3a4d" stroke-width="1.3" stroke-linecap="butt" fill="none"/><path d="M-631.5 3079.1L3611.1 -1163.5" stroke="#2d3a4d" stroke-width="1.3" stroke-linecap="butt" fill="none"/><path d="M-567.2 3143.4L3675.4 -1099.2" stroke="#2d3a4d" stroke-width="1.3" stroke-linecap="butt" fill="none"/><path d="M-535.0 3175.6L3707.6 -1067.0" stroke="#2d3a4d" stroke-width="1.3" stroke-linecap="butt" fill="none"/><path d="M-502.8 3207.8L3739.8 -1034.8" stroke="#2d3a4d" stroke-width="1.3" stroke-linecap="butt" fill="none"/><path d="M-470.7 3240.0L3772.0 -1002.7" stroke="#2d3a4d" stroke-width="1.3" stroke-linecap="butt" fill="none"/><path d="M-438.5 3272.1L3804.1 -970.5" stroke="#2d3a4d" stroke-width="1.3" stroke-linecap="butt" fill="none"/><path d="M-309.8 3400.8L3932.8 -841.8" stroke="#2d3a4d" stroke-width="1.3" stroke-linecap="butt" fill="none"/></g>
<g clip-path="url(#cS)"><path d="M-1313.8 -770.8L2928.8 3471.8" stroke="#2d3a4d" stroke-width="1.3" stroke-linecap="butt" fill="none"/><path d="M-1270.8 -813.8L2971.8 3428.8" stroke="#273447" stroke-width="3.5" stroke-linecap="butt" fill="none"/><path d="M-1141.8 -942.8L3100.8 3299.8" stroke="#2d3a4d" stroke-width="1.3" stroke-linecap="butt" fill="none"/><path d="M-1098.8 -985.8L3143.8 3256.8" stroke="#2d3a4d" stroke-width="1.3" stroke-linecap="butt" fill="none"/><path d="M-1055.8 -1028.8L3186.8 3213.8" stroke="#273447" stroke-width="3.5" stroke-linecap="butt" fill="none"/><path d="M-1012.8 -1071.8L3229.8 3170.8" stroke="#2d3a4d" stroke-width="1.3" stroke-linecap="butt" fill="none"/><path d="M-969.8 -1114.8L3272.8 3127.8" stroke="#2d3a4d" stroke-width="1.3" stroke-linecap="butt" fill="none"/><path d="M-926.8 -1157.8L3315.8 3084.8" stroke="#2d3a4d" stroke-width="1.3" stroke-linecap="butt" fill="none"/><path d="M-840.8 -1243.8L3401.8 2998.8" stroke="#2d3a4d" stroke-width="1.3" stroke-linecap="butt" fill="none"/><path d="M-711.8 -1372.8L3530.8 2869.8" stroke="#2d3a4d" stroke-width="1.3" stroke-linecap="butt" fill="none"/><path d="M-668.8 -1415.8L3573.8 2826.8" stroke="#2d3a4d" stroke-width="1.3" stroke-linecap="butt" fill="none"/><path d="M-625.8 -1458.8L3616.8 2783.8" stroke="#2d3a4d" stroke-width="1.3" stroke-linecap="butt" fill="none"/><path d="M-539.8 -1544.8L3702.8 2697.8" stroke="#2d3a4d" stroke-width="1.3" stroke-linecap="butt" fill="none"/><path d="M-453.8 -1630.8L3788.8 2611.8" stroke="#2d3a4d" stroke-width="1.3" stroke-linecap="butt" fill="none"/><path d="M-410.8 -1673.8L3831.8 2568.8" stroke="#2d3a4d" stroke-width="1.3" stroke-linecap="butt" fill="none"/><path d="M-367.8 -1716.8L3874.8 2525.8" stroke="#2d3a4d" stroke-width="1.3" stroke-linecap="butt" fill="none"/><path d="M-324.8 -1759.8L3917.8 2482.8" stroke="#2d3a4d" stroke-width="1.3" stroke-linecap="butt" fill="none"/><path d="M-281.8 -1802.8L3960.8 2439.8" stroke="#2d3a4d" stroke-width="1.3" stroke-linecap="butt" fill="none"/><path d="M-238.8 -1845.8L4003.8 2396.8" stroke="#2d3a4d" stroke-width="1.3" stroke-linecap="butt" fill="none"/><path d="M-195.8 -1888.8L4046.8 2353.8" stroke="#2d3a4d" stroke-width="1.3" stroke-linecap="butt" fill="none"/><path d="M-152.8 -1931.8L4089.8 2310.8" stroke="#2d3a4d" stroke-width="1.3" stroke-linecap="butt" fill="none"/></g>
<clipPath id="cS2"><polygon points="1560,600 1690,468 1840,600 1840,915 1757,942 1700,880"/></clipPath>
<g clip-path="url(#cS2)"><path d="M-1356.8 -727.8L2885.8 3514.8" stroke="#273447" stroke-width="4.5" stroke-linecap="butt" fill="none"/><path d="M-1313.8 -770.8L2928.8 3471.8" stroke="#273447" stroke-width="4.5" stroke-linecap="butt" fill="none"/><path d="M-1270.8 -813.8L2971.8 3428.8" stroke="#273447" stroke-width="4.5" stroke-linecap="butt" fill="none"/><path d="M-1227.8 -856.8L3014.8 3385.8" stroke="#273447" stroke-width="4.5" stroke-linecap="butt" fill="none"/><path d="M-1184.8 -899.8L3057.8 3342.8" stroke="#273447" stroke-width="4.5" stroke-linecap="butt" fill="none"/><path d="M-1141.8 -942.8L3100.8 3299.8" stroke="#273447" stroke-width="4.5" stroke-linecap="butt" fill="none"/><path d="M-1098.8 -985.8L3143.8 3256.8" stroke="#273447" stroke-width="4.5" stroke-linecap="butt" fill="none"/><path d="M-1055.8 -1028.8L3186.8 3213.8" stroke="#273447" stroke-width="4.5" stroke-linecap="butt" fill="none"/><path d="M-1012.8 -1071.8L3229.8 3170.8" stroke="#273447" stroke-width="4.5" stroke-linecap="butt" fill="none"/><path d="M-969.8 -1114.8L3272.8 3127.8" stroke="#273447" stroke-width="4.5" stroke-linecap="butt" fill="none"/><path d="M-926.8 -1157.8L3315.8 3084.8" stroke="#273447" stroke-width="4.5" stroke-linecap="butt" fill="none"/><path d="M-883.8 -1200.8L3358.8 3041.8" stroke="#273447" stroke-width="4.5" stroke-linecap="butt" fill="none"/><path d="M-840.8 -1243.8L3401.8 2998.8" stroke="#273447" stroke-width="4.5" stroke-linecap="butt" fill="none"/><path d="M-797.8 -1286.8L3444.8 2955.8" stroke="#273447" stroke-width="4.5" stroke-linecap="butt" fill="none"/><path d="M-754.8 -1329.8L3487.8 2912.8" stroke="#273447" stroke-width="4.5" stroke-linecap="butt" fill="none"/><path d="M-711.8 -1372.8L3530.8 2869.8" stroke="#273447" stroke-width="4.5" stroke-linecap="butt" fill="none"/><path d="M-668.8 -1415.8L3573.8 2826.8" stroke="#273447" stroke-width="4.5" stroke-linecap="butt" fill="none"/><path d="M-625.8 -1458.8L3616.8 2783.8" stroke="#273447" stroke-width="4.5" stroke-linecap="butt" fill="none"/><path d="M-582.8 -1501.8L3659.8 2740.8" stroke="#273447" stroke-width="4.5" stroke-linecap="butt" fill="none"/><path d="M-539.8 -1544.8L3702.8 2697.8" stroke="#273447" stroke-width="4.5" stroke-linecap="butt" fill="none"/><path d="M-496.8 -1587.8L3745.8 2654.8" stroke="#273447" stroke-width="4.5" stroke-linecap="butt" fill="none"/><path d="M-453.8 -1630.8L3788.8 2611.8" stroke="#273447" stroke-width="4.5" stroke-linecap="butt" fill="none"/><path d="M-410.8 -1673.8L3831.8 2568.8" stroke="#273447" stroke-width="4.5" stroke-linecap="butt" fill="none"/><path d="M-367.8 -1716.8L3874.8 2525.8" stroke="#273447" stroke-width="4.5" stroke-linecap="butt" fill="none"/><path d="M-324.8 -1759.8L3917.8 2482.8" stroke="#273447" stroke-width="4.5" stroke-linecap="butt" fill="none"/><path d="M-281.8 -1802.8L3960.8 2439.8" stroke="#273447" stroke-width="4.5" stroke-linecap="butt" fill="none"/><path d="M-238.8 -1845.8L4003.8 2396.8" stroke="#273447" stroke-width="4.5" stroke-linecap="butt" fill="none"/><path d="M-195.8 -1888.8L4046.8 2353.8" stroke="#273447" stroke-width="4.5" stroke-linecap="butt" fill="none"/><path d="M-152.8 -1931.8L4089.8 2310.8" stroke="#273447" stroke-width="4.5" stroke-linecap="butt" fill="none"/></g>
<g clip-path="url(#cM)"><path d="M-2007.4 1031.9L3978.0 613.4" stroke="#273447" stroke-width="1.8" stroke-linecap="butt" fill="none"/><path d="M-2004.7 1070.3L3980.7 651.8" stroke="#273447" stroke-width="3.5" stroke-linecap="butt" fill="none"/><path d="M-2002.0 1108.7L3983.3 690.2" stroke="#273447" stroke-width="1.8" stroke-linecap="butt" fill="none"/><path d="M-1999.4 1147.1L3986.0 728.6" stroke="#273447" stroke-width="1.8" stroke-linecap="butt" fill="none"/><path d="M-1996.7 1185.5L3988.7 767.0" stroke="#273447" stroke-width="1.8" stroke-linecap="butt" fill="none"/><path d="M-1994.0 1223.9L3991.4 805.4" stroke="#273447" stroke-width="1.8" stroke-linecap="butt" fill="none"/><path d="M-1991.3 1262.3L3994.1 843.8" stroke="#273447" stroke-width="1.8" stroke-linecap="butt" fill="none"/><path d="M-1988.6 1300.7L3996.8 882.2" stroke="#273447" stroke-width="1.8" stroke-linecap="butt" fill="none"/><path d="M-1985.9 1339.1L3999.4 920.6" stroke="#273447" stroke-width="1.8" stroke-linecap="butt" fill="none"/><path d="M-1983.2 1377.6L4002.1 959.0" stroke="#273447" stroke-width="1.8" stroke-linecap="butt" fill="none"/><path d="M-1980.6 1416.0L4004.8 997.4" stroke="#273447" stroke-width="5" stroke-linecap="butt" fill="none"/><path d="M-1977.9 1454.4L4007.5 1035.8" stroke="#273447" stroke-width="3.5" stroke-linecap="butt" fill="none"/><path d="M-1975.2 1492.8L4010.2 1074.2" stroke="#273447" stroke-width="6.5" stroke-linecap="butt" fill="none"/><path d="M-1972.5 1531.2L4012.9 1112.6" stroke="#273447" stroke-width="5.5" stroke-linecap="butt" fill="none"/><path d="M-1969.8 1569.6L4015.6 1151.0" stroke="#273447" stroke-width="1.8" stroke-linecap="butt" fill="none"/><path d="M-1967.1 1608.0L4018.2 1189.4" stroke="#273447" stroke-width="6" stroke-linecap="butt" fill="none"/><path d="M-1964.4 1646.4L4020.9 1227.9" stroke="#273447" stroke-width="1.8" stroke-linecap="butt" fill="none"/><path d="M-1961.8 1684.8L4023.6 1266.3" stroke="#273447" stroke-width="5" stroke-linecap="butt" fill="none"/><path d="M-1959.1 1723.2L4026.3 1304.7" stroke="#273447" stroke-width="1.8" stroke-linecap="butt" fill="none"/><path d="M-1956.4 1761.6L4029.0 1343.1" stroke="#273447" stroke-width="3.5" stroke-linecap="butt" fill="none"/><path d="M-1953.7 1800.0L4031.7 1381.5" stroke="#273447" stroke-width="1.8" stroke-linecap="butt" fill="none"/><path d="M-1951.0 1838.4L4034.4 1419.9" stroke="#273447" stroke-width="1.8" stroke-linecap="butt" fill="none"/><path d="M-1948.3 1876.8L4037.0 1458.3" stroke="#273447" stroke-width="1.8" stroke-linecap="butt" fill="none"/><path d="M-1945.7 1915.2L4039.7 1496.7" stroke="#273447" stroke-width="1.8" stroke-linecap="butt" fill="none"/><path d="M-1943.0 1953.6L4042.4 1535.1" stroke="#273447" stroke-width="1.8" stroke-linecap="butt" fill="none"/><path d="M-319.0 -1630.4L99.5 4355.0" stroke="#2d3a4d" stroke-width="1.5" stroke-linecap="butt" fill="none"/><path d="M-273.9 -1633.5L144.6 4351.9" stroke="#2d3a4d" stroke-width="1.5" stroke-linecap="butt" fill="none"/><path d="M-228.8 -1636.7L189.7 4348.7" stroke="#2d3a4d" stroke-width="1.5" stroke-linecap="butt" fill="none"/><path d="M-183.7 -1639.8L234.8 4345.6" stroke="#273447" stroke-width="3" stroke-linecap="butt" fill="none"/><path d="M-138.7 -1643.0L279.9 4342.4" stroke="#273447" stroke-width="3" stroke-linecap="butt" fill="none"/><path d="M-93.6 -1646.1L325.0 4339.3" stroke="#2d3a4d" stroke-width="1.5" stroke-linecap="butt" fill="none"/><path d="M-48.5 -1649.3L370.1 4336.1" stroke="#2d3a4d" stroke-width="1.5" stroke-linecap="butt" fill="none"/><path d="M-3.4 -1652.4L415.2 4332.9" stroke="#273447" stroke-width="3" stroke-linecap="butt" fill="none"/><path d="M41.7 -1655.6L460.2 4329.8" stroke="#2d3a4d" stroke-width="1.5" stroke-linecap="butt" fill="none"/><path d="M86.8 -1658.7L505.3 4326.6" stroke="#273447" stroke-width="3" stroke-linecap="butt" fill="none"/><path d="M131.9 -1661.9L550.4 4323.5" stroke="#273447" stroke-width="3" stroke-linecap="butt" fill="none"/><path d="M177.0 -1665.1L595.5 4320.3" stroke="#2d3a4d" stroke-width="1.5" stroke-linecap="butt" fill="none"/><path d="M222.1 -1668.2L640.6 4317.2" stroke="#2d3a4d" stroke-width="1.5" stroke-linecap="butt" fill="none"/><path d="M267.2 -1671.4L685.7 4314.0" stroke="#2d3a4d" stroke-width="1.5" stroke-linecap="butt" fill="none"/><path d="M312.2 -1674.5L730.8 4310.9" stroke="#2d3a4d" stroke-width="1.5" stroke-linecap="butt" fill="none"/><path d="M357.3 -1677.7L775.9 4307.7" stroke="#273447" stroke-width="3" stroke-linecap="butt" fill="none"/><path d="M402.4 -1680.8L821.0 4304.6" stroke="#273447" stroke-width="3" stroke-linecap="butt" fill="none"/><path d="M447.5 -1684.0L866.1 4301.4" stroke="#273447" stroke-width="3" stroke-linecap="butt" fill="none"/><path d="M492.6 -1687.1L911.1 4298.3" stroke="#2d3a4d" stroke-width="1.5" stroke-linecap="butt" fill="none"/><path d="M537.7 -1690.3L956.2 4295.1" stroke="#2d3a4d" stroke-width="1.5" stroke-linecap="butt" fill="none"/><path d="M582.8 -1693.4L1001.3 4292.0" stroke="#2d3a4d" stroke-width="1.5" stroke-linecap="butt" fill="none"/><path d="M627.9 -1696.6L1046.4 4288.8" stroke="#2d3a4d" stroke-width="1.5" stroke-linecap="butt" fill="none"/><path d="M673.0 -1699.7L1091.5 4285.7" stroke="#273447" stroke-width="6.5" stroke-linecap="butt" fill="none"/><path d="M718.1 -1702.9L1136.6 4282.5" stroke="#273447" stroke-width="6.5" stroke-linecap="butt" fill="none"/><path d="M763.1 -1706.0L1181.7 4279.3" stroke="#273447" stroke-width="6.5" stroke-linecap="butt" fill="none"/><path d="M808.2 -1709.2L1226.8 4276.2" stroke="#273447" stroke-width="9" stroke-linecap="butt" fill="none"/><path d="M853.3 -1712.3L1271.9 4273.0" stroke="#273447" stroke-width="6.5" stroke-linecap="butt" fill="none"/><path d="M898.4 -1715.5L1316.9 4269.9" stroke="#273447" stroke-width="6.5" stroke-linecap="butt" fill="none"/><path d="M943.5 -1718.7L1362.0 4266.7" stroke="#273447" stroke-width="6.5" stroke-linecap="butt" fill="none"/><path d="M988.6 -1721.8L1407.1 4263.6" stroke="#273447" stroke-width="6.5" stroke-linecap="butt" fill="none"/><path d="M1033.7 -1725.0L1452.2 4260.4" stroke="#273447" stroke-width="6.5" stroke-linecap="butt" fill="none"/><path d="M1078.8 -1728.1L1497.3 4257.3" stroke="#273447" stroke-width="6.5" stroke-linecap="butt" fill="none"/><path d="M1123.9 -1731.3L1542.4 4254.1" stroke="#273447" stroke-width="6.5" stroke-linecap="butt" fill="none"/><path d="M1168.9 -1734.4L1587.5 4251.0" stroke="#273447" stroke-width="6.5" stroke-linecap="butt" fill="none"/><path d="M1214.0 -1737.6L1632.6 4247.8" stroke="#273447" stroke-width="6.5" stroke-linecap="butt" fill="none"/><path d="M1349.3 -1747.0L1767.8 4238.4" stroke="#273447" stroke-width="6" stroke-linecap="butt" fill="none"/><path d="M1394.4 -1750.2L1812.9 4235.2" stroke="#273447" stroke-width="2" stroke-linecap="butt" fill="none"/><path d="M1439.5 -1753.3L1858.0 4232.1" stroke="#273447" stroke-width="2" stroke-linecap="butt" fill="none"/><path d="M1484.6 -1756.5L1903.1 4228.9" stroke="#273447" stroke-width="6" stroke-linecap="butt" fill="none"/><path d="M1529.7 -1759.6L1948.2 4225.7" stroke="#273447" stroke-width="2" stroke-linecap="butt" fill="none"/><path d="M1574.8 -1762.8L1993.3 4222.6" stroke="#273447" stroke-width="2" stroke-linecap="butt" fill="none"/><path d="M1619.8 -1765.9L2038.4 4219.4" stroke="#273447" stroke-width="6" stroke-linecap="butt" fill="none"/><path d="M1664.9 -1769.1L2083.5 4216.3" stroke="#273447" stroke-width="2" stroke-linecap="butt" fill="none"/><path d="M1710.0 -1772.3L2128.6 4213.1" stroke="#273447" stroke-width="2" stroke-linecap="butt" fill="none"/><path d="M1755.1 -1775.4L2173.7 4210.0" stroke="#273447" stroke-width="6" stroke-linecap="butt" fill="none"/><path d="M1800.2 -1778.6L2218.7 4206.8" stroke="#273447" stroke-width="2" stroke-linecap="butt" fill="none"/><path d="M1845.3 -1781.7L2263.8 4203.7" stroke="#273447" stroke-width="2" stroke-linecap="butt" fill="none"/><path d="M1890.4 -1784.9L2308.9 4200.5" stroke="#273447" stroke-width="6" stroke-linecap="butt" fill="none"/><path d="M1935.5 -1788.0L2354.0 4197.4" stroke="#273447" stroke-width="2" stroke-linecap="butt" fill="none"/></g>
<g clip-path="url(#cM)"><path d="M-1972.8 1203.1L4012.6 784.6" stroke="#2d3a4d" stroke-width="1.1" stroke-linecap="butt" fill="none"/><path d="M-1967.4 1280.0L4018.0 861.4" stroke="#2d3a4d" stroke-width="1.1" stroke-linecap="butt" fill="none"/><path d="M-1959.4 1395.2L4026.0 976.6" stroke="#2d3a4d" stroke-width="1.1" stroke-linecap="butt" fill="none"/><path d="M-1956.7 1433.6L4028.7 1015.0" stroke="#2d3a4d" stroke-width="1.1" stroke-linecap="butt" fill="none"/><path d="M-1954.0 1472.0L4031.4 1053.5" stroke="#2d3a4d" stroke-width="1.1" stroke-linecap="butt" fill="none"/><path d="M-1945.9 1587.2L4039.5 1168.7" stroke="#2d3a4d" stroke-width="1.1" stroke-linecap="butt" fill="none"/><path d="M-1943.2 1625.6L4042.1 1207.1" stroke="#2d3a4d" stroke-width="1.1" stroke-linecap="butt" fill="none"/><path d="M-1935.2 1740.8L4050.2 1322.3" stroke="#2d3a4d" stroke-width="1.1" stroke-linecap="butt" fill="none"/><path d="M-1932.5 1779.2L4052.9 1360.7" stroke="#2d3a4d" stroke-width="1.1" stroke-linecap="butt" fill="none"/><path d="M-1927.1 1856.1L4058.3 1437.5" stroke="#2d3a4d" stroke-width="1.1" stroke-linecap="butt" fill="none"/><path d="M-1924.4 1894.5L4060.9 1475.9" stroke="#2d3a4d" stroke-width="1.1" stroke-linecap="butt" fill="none"/><path d="M-295.1 -1612.7L123.4 4372.6" stroke="#2d3a4d" stroke-width="1.2" stroke-linecap="butt" fill="none"/><path d="M-204.9 -1619.0L213.6 4366.3" stroke="#2d3a4d" stroke-width="1.2" stroke-linecap="butt" fill="none"/><path d="M-159.9 -1622.2L258.7 4363.2" stroke="#2d3a4d" stroke-width="1.2" stroke-linecap="butt" fill="none"/><path d="M-114.8 -1625.4L303.8 4360.0" stroke="#2d3a4d" stroke-width="1.2" stroke-linecap="butt" fill="none"/><path d="M20.5 -1634.8L439.0 4350.6" stroke="#2d3a4d" stroke-width="1.2" stroke-linecap="butt" fill="none"/><path d="M65.6 -1638.0L484.1 4347.4" stroke="#2d3a4d" stroke-width="1.2" stroke-linecap="butt" fill="none"/><path d="M110.7 -1641.1L529.2 4344.3" stroke="#2d3a4d" stroke-width="1.2" stroke-linecap="butt" fill="none"/><path d="M155.8 -1644.3L574.3 4341.1" stroke="#2d3a4d" stroke-width="1.2" stroke-linecap="butt" fill="none"/><path d="M200.9 -1647.4L619.4 4338.0" stroke="#2d3a4d" stroke-width="1.2" stroke-linecap="butt" fill="none"/><path d="M245.9 -1650.6L664.5 4334.8" stroke="#2d3a4d" stroke-width="1.2" stroke-linecap="butt" fill="none"/><path d="M291.0 -1653.7L709.6 4331.7" stroke="#2d3a4d" stroke-width="1.2" stroke-linecap="butt" fill="none"/><path d="M381.2 -1660.0L799.8 4325.3" stroke="#2d3a4d" stroke-width="1.2" stroke-linecap="butt" fill="none"/><path d="M426.3 -1663.2L844.8 4322.2" stroke="#2d3a4d" stroke-width="1.2" stroke-linecap="butt" fill="none"/><path d="M471.4 -1666.3L889.9 4319.0" stroke="#2d3a4d" stroke-width="1.2" stroke-linecap="butt" fill="none"/><path d="M516.5 -1669.5L935.0 4315.9" stroke="#2d3a4d" stroke-width="1.2" stroke-linecap="butt" fill="none"/><path d="M561.6 -1672.6L980.1 4312.7" stroke="#2d3a4d" stroke-width="1.2" stroke-linecap="butt" fill="none"/><path d="M606.7 -1675.8L1025.2 4309.6" stroke="#2d3a4d" stroke-width="1.2" stroke-linecap="butt" fill="none"/><path d="M741.9 -1685.3L1160.5 4300.1" stroke="#2d3a4d" stroke-width="1.2" stroke-linecap="butt" fill="none"/><path d="M787.0 -1688.4L1205.6 4297.0" stroke="#2d3a4d" stroke-width="1.2" stroke-linecap="butt" fill="none"/><path d="M877.2 -1694.7L1295.7 4290.7" stroke="#2d3a4d" stroke-width="1.2" stroke-linecap="butt" fill="none"/><path d="M967.4 -1701.0L1385.9 4284.4" stroke="#2d3a4d" stroke-width="1.2" stroke-linecap="butt" fill="none"/><path d="M1012.5 -1704.2L1431.0 4281.2" stroke="#2d3a4d" stroke-width="1.2" stroke-linecap="butt" fill="none"/><path d="M1102.7 -1710.5L1521.2 4274.9" stroke="#2d3a4d" stroke-width="1.2" stroke-linecap="butt" fill="none"/><path d="M1192.8 -1716.8L1611.4 4268.6" stroke="#2d3a4d" stroke-width="1.2" stroke-linecap="butt" fill="none"/><path d="M1237.9 -1719.9L1656.5 4265.4" stroke="#2d3a4d" stroke-width="1.2" stroke-linecap="butt" fill="none"/><path d="M1283.0 -1723.1L1701.6 4262.3" stroke="#2d3a4d" stroke-width="1.2" stroke-linecap="butt" fill="none"/><path d="M1328.1 -1726.2L1746.6 4259.1" stroke="#2d3a4d" stroke-width="1.2" stroke-linecap="butt" fill="none"/><path d="M1373.2 -1729.4L1791.7 4256.0" stroke="#2d3a4d" stroke-width="1.2" stroke-linecap="butt" fill="none"/><path d="M1463.4 -1735.7L1881.9 4249.7" stroke="#2d3a4d" stroke-width="1.2" stroke-linecap="butt" fill="none"/><path d="M1508.5 -1738.9L1927.0 4246.5" stroke="#2d3a4d" stroke-width="1.2" stroke-linecap="butt" fill="none"/><path d="M1553.6 -1742.0L1972.1 4243.4" stroke="#2d3a4d" stroke-width="1.2" stroke-linecap="butt" fill="none"/><path d="M1643.7 -1748.3L2062.3 4237.1" stroke="#2d3a4d" stroke-width="1.2" stroke-linecap="butt" fill="none"/><path d="M1688.8 -1751.5L2107.4 4233.9" stroke="#2d3a4d" stroke-width="1.2" stroke-linecap="butt" fill="none"/><path d="M1733.9 -1754.6L2152.5 4230.8" stroke="#2d3a4d" stroke-width="1.2" stroke-linecap="butt" fill="none"/><path d="M1779.0 -1757.8L2197.5 4227.6" stroke="#2d3a4d" stroke-width="1.2" stroke-linecap="butt" fill="none"/></g>
<polygon points="88.0,118.0 105.0,118.0 105.0,1472.0 88.0,1472.0" fill="#384658" />
<polygon points="88.0,632.0 105.0,597.0 105.0,676.0 88.0,676.0" fill="#1e2a38" />
<path d="M88.0 140.0L105.0 175.0" stroke="#2c394c" stroke-width="2.2" stroke-linecap="butt" fill="none"/>
<path d="M88.0 200.0L105.0 215.0" stroke="#2c394c" stroke-width="2.2" stroke-linecap="butt" fill="none"/>
<path d="M88.0 228.0L105.0 262.0" stroke="#2c394c" stroke-width="2.2" stroke-linecap="butt" fill="none"/>
<path d="M88.0 300.0L105.0 290.0" stroke="#2c394c" stroke-width="2.2" stroke-linecap="butt" fill="none"/>
<path d="M88.0 520.0L105.0 512.0" stroke="#2c394c" stroke-width="2.2" stroke-linecap="butt" fill="none"/>
<path d="M88.0 540.0L105.0 552.0" stroke="#2c394c" stroke-width="2.2" stroke-linecap="butt" fill="none"/>
<path d="M88.0 836.0L105.0 826.0" stroke="#2c394c" stroke-width="2.2" stroke-linecap="butt" fill="none"/>
<path d="M88.0 1290.0L105.0 1330.0" stroke="#2c394c" stroke-width="2.2" stroke-linecap="butt" fill="none"/>
<path d="M88.0 1396.0L105.0 1391.0" stroke="#2c394c" stroke-width="2.2" stroke-linecap="butt" fill="none"/>
<path d="M96 118C99 160 92 220 100 290" stroke="#2c394c" stroke-width="2" fill="none" stroke-linejoin="round" />
<path d="M860.0 1298.0L1690.0 468.0" stroke="#273447" stroke-width="10" stroke-linecap="butt" fill="none"/>
<path d="M1158.0 176.0L1490.0 468.0" stroke="#273447" stroke-width="6.5" stroke-linecap="butt" fill="none"/>
<path d="M1131 154.500L1200 140L1300 126.600C1330 128 1355 134 1372 140C1395 150 1412 158 1426 167C1445 180 1460 193 1473 204C1500 230 1520 250 1531 262C1548 283 1566 308 1581 331L1617.500 384L1659 442L1703 500L1746 551C1758 568 1766 580 1772 592C1786 610 1793 618 1798 628C1803 645 1806 660 1806.500 678L1804 732L1798 800C1796 830 1795 850 1793 862C1788 890 1775 905 1760 920L1690 990" stroke="#273447" stroke-width="8.5" fill="none" stroke-linejoin="round" />
<path d="M1772 592C1786 610 1793 618 1798 628C1803 645 1806 660 1806.500 678L1804 732L1798 800C1796 830 1795 850 1793 862" stroke="#273447" stroke-width="12" fill="none" stroke-linejoin="round" />
<path d="M1806 640C1770 680 1740 715 1700 762C1660 800 1620 840 1560 893C1530 920 1510 940 1498 949C1470 968 1445 978 1431 990C1420 1003 1417 1020 1419 1040C1421 1065 1430 1085 1437 1100C1442 1130 1443 1150 1445 1179C1450 1210 1458 1235 1461 1257C1463 1280 1460 1295 1455 1310C1448 1330 1435 1345 1429 1362C1425 1385 1430 1400 1437 1415C1448 1437 1462 1452 1477 1470" stroke="#273447" stroke-width="11" fill="none" stroke-linejoin="round" />
<path d="M1500 945C1470 950 1440 960 1410 985C1385 1010 1372 1050 1370 1100" stroke="#273447" stroke-width="6" fill="none" stroke-linejoin="round" />
<path d="M1090 1100C1100 1118 1130 1128 1180 1130C1260 1133 1330 1140 1385 1152C1410 1158 1425 1166 1440 1178" stroke="#273447" stroke-width="9.5" fill="none" stroke-linejoin="round" />
<path d="M1040 1135L1440 1150" stroke="#273447" stroke-width="5" fill="none" stroke-linejoin="round" />
<path d="M1150 1135C1160 1100 1170 1080 1180 1060" stroke="#273447" stroke-width="5" fill="none" stroke-linejoin="round" />
<path d="M1195 1135C1190 1100 1185 1080 1176 1050" stroke="#273447" stroke-width="5" fill="none" stroke-linejoin="round" />
<path d="M1890 760C1880 800 1860 830 1830 855C1790 890 1740 930 1690 975C1650 1010 1610 1040 1600 1070C1588 1110 1592 1140 1610 1170C1640 1215 1680 1245 1695 1290C1712 1340 1716 1400 1722 1472" stroke="#273447" stroke-width="10" fill="none" stroke-linejoin="round" />
<path d="M1640 1215C1670 1260 1690 1330 1700 1472" stroke="#273447" stroke-width="6" fill="none" stroke-linejoin="round" />
<path d="M1750 940L1758 1100L1780 1300L1800 1472" stroke="#273447" stroke-width="8" fill="none" stroke-linejoin="round" />
<path d="M1500 1228L1820 1208" stroke="#273447" stroke-width="5.5" fill="none" stroke-linejoin="round" />
<path d="M1500 1295L1810 1276" stroke="#273447" stroke-width="5.5" fill="none" stroke-linejoin="round" />
</g>
<circle cx="1200" cy="662" r="36.500" fill="rgba(58,163,251,0.20)"/><circle cx="1200" cy="662" r="16.300" fill="#3aa3fb"/>
<circle cx="1492" cy="1012" r="36.500" fill="rgba(58,163,251,0.20)"/><circle cx="1492" cy="1012" r="16.300" fill="#3aa3fb"/>
<circle cx="855" cy="497" r="36.500" fill="rgba(58,163,251,0.20)"/><circle cx="855" cy="497" r="16.300" fill="#3aa3fb"/>
<path transform="translate(1255.0 250.0)" d="M17.00 46.50C9.35 37.20 0 26.97 0 17.00A17.00 17.00 0 0 1 34.00 17.00C34.00 26.97 24.65 37.20 17.00 46.50Z" fill="#b3becd" stroke="rgba(10,15,25,0.30)" stroke-width="2.400" paint-order="stroke"/>
<path transform="translate(1475.0 304.0)" d="M17.00 46.50C9.35 37.20 0 26.97 0 17.00A17.00 17.00 0 0 1 34.00 17.00C34.00 26.97 24.65 37.20 17.00 46.50Z" fill="#c49bf8" stroke="rgba(10,15,25,0.30)" stroke-width="2.400" paint-order="stroke"/>
<path transform="translate(1275.0 486.0)" d="M17.00 46.50C9.35 37.20 0 26.97 0 17.00A17.00 17.00 0 0 1 34.00 17.00C34.00 26.97 24.65 37.20 17.00 46.50Z" fill="#c49bf8" stroke="rgba(10,15,25,0.30)" stroke-width="2.400" paint-order="stroke"/>
<path transform="translate(1355.0 586.0)" d="M17.00 46.50C9.35 37.20 0 26.97 0 17.00A17.00 17.00 0 0 1 34.00 17.00C34.00 26.97 24.65 37.20 17.00 46.50Z" fill="#f8c500" stroke="rgba(10,15,25,0.30)" stroke-width="2.400" paint-order="stroke"/>
<path transform="translate(1535.0 646.0)" d="M17.00 46.50C9.35 37.20 0 26.97 0 17.00A17.00 17.00 0 0 1 34.00 17.00C34.00 26.97 24.65 37.20 17.00 46.50Z" fill="#c49bf8" stroke="rgba(10,15,25,0.30)" stroke-width="2.400" paint-order="stroke"/>
<path transform="translate(935.0 704.0)" d="M17.00 46.50C9.35 37.20 0 26.97 0 17.00A17.00 17.00 0 0 1 34.00 17.00C34.00 26.97 24.65 37.20 17.00 46.50Z" fill="#c49bf8" stroke="rgba(10,15,25,0.30)" stroke-width="2.400" paint-order="stroke"/>
<path transform="translate(1235.0 770.0)" d="M17.00 46.50C9.35 37.20 0 26.97 0 17.00A17.00 17.00 0 0 1 34.00 17.00C34.00 26.97 24.65 37.20 17.00 46.50Z" fill="#b3becd" stroke="rgba(10,15,25,0.30)" stroke-width="2.400" paint-order="stroke"/>
<path transform="translate(1715.0 766.0)" d="M17.00 46.50C9.35 37.20 0 26.97 0 17.00A17.00 17.00 0 0 1 34.00 17.00C34.00 26.97 24.65 37.20 17.00 46.50Z" fill="#c49bf8" stroke="rgba(10,15,25,0.30)" stroke-width="2.400" paint-order="stroke"/>
<path transform="translate(1507.0 822.0)" d="M17.00 46.50C9.35 37.20 0 26.97 0 17.00A17.00 17.00 0 0 1 34.00 17.00C34.00 26.97 24.65 37.20 17.00 46.50Z" fill="#3aa3fb" stroke="rgba(10,15,25,0.30)" stroke-width="2.400" paint-order="stroke"/>
<path transform="translate(897.0 986.0)" d="M17.00 46.50C9.35 37.20 0 26.97 0 17.00A17.00 17.00 0 0 1 34.00 17.00C34.00 26.97 24.65 37.20 17.00 46.50Z" fill="#c49bf8" stroke="rgba(10,15,25,0.30)" stroke-width="2.400" paint-order="stroke"/>
<path transform="translate(949.0 1210.0)" d="M17.00 46.50C9.35 37.20 0 26.97 0 17.00A17.00 17.00 0 0 1 34.00 17.00C34.00 26.97 24.65 37.20 17.00 46.50Z" fill="#f8c500" stroke="rgba(10,15,25,0.30)" stroke-width="2.400" paint-order="stroke"/>
<path transform="translate(1239.0 1350.0)" d="M17.00 46.50C9.35 37.20 0 26.97 0 17.00A17.00 17.00 0 0 1 34.00 17.00C34.00 26.97 24.65 37.20 17.00 46.50Z" fill="#c49bf8" stroke="rgba(10,15,25,0.30)" stroke-width="2.400" paint-order="stroke"/>
</svg>
<div class="bg" style="left:0;top:80px;width:88px;height:1.500px;background:#55647b"></div>
<div id="topbar" class="layer">
<svg class="abs" style="left:28px;top:20px" width="80" height="44" viewBox="28 20 80 44"><g fill="none" stroke="#fff" stroke-linecap="round" stroke-linejoin="round"><path d="M46 27.500C39 27.500 35 33 35 41C35 49 39 54.500 46 54.500C52 54.500 59 52 67 41C75 30 82 27.500 88 27.500C95 27.500 99 33 99 41C99 49 95 54.500 88 54.500" stroke-width="5"/><path d="M46 27.500C50 27.500 54 28.700 57.500 31.800M88 54.500C84 54.500 80 53.300 76.500 50.200" stroke-width="3.800"/><path d="M57.500 31.800C60.500 33.500 63.500 36.500 67 41C70.500 45.500 73.500 48.500 76.500 50.200" stroke-width="2.300"/></g></svg>
<span class="t" style="left:1203.20px;top:30.80px;font-size:28px;line-height:36px;color:#fff;letter-spacing:2.501px;-webkit-text-stroke:0.5px #fff;">Map</span>
<span class="t" style="left:1311.87px;top:30.80px;font-size:28px;line-height:36px;color:#fff;letter-spacing:0.233px;-webkit-text-stroke:0.5px #fff;">Table</span>
<span class="t" style="left:1430.45px;top:30.80px;font-size:28px;line-height:36px;color:#fff;letter-spacing:-0.303px;-webkit-text-stroke:0.5px #fff;">Analyze</span>
<div class="abs" style="left:1184px;top:76px;width:104px;height:5px;border-radius:3px;background:#fff"></div>
<svg class="abs" style="left:2284px;top:20px" width="40" height="40" viewBox="0 0 40 40"><path d="M20.5 8v24M8.5 20h24" stroke="#fff" fill="none" stroke-linecap="round" stroke-linejoin="round" stroke-width="6"/></svg>
<svg class="abs" style="left:2358px;top:20px" width="40" height="40" viewBox="0 0 40 40"><path d="M16 7h11l7 8v18H16" stroke="#fff" fill="none" stroke-linecap="round" stroke-linejoin="round" stroke-width="4.6" stroke-linecap="butt"/><path d="M9 20.500h9.500M13.750 16.500v8" stroke="#fff" fill="none" stroke-linecap="round" stroke-linejoin="round" stroke-width="4.4"/><circle cx="16" cy="7" r="2.3" fill="#fff"/><circle cx="16" cy="33" r="2.3" fill="#fff"/></svg>
<svg class="abs" style="left:2432px;top:20px" width="40" height="40" viewBox="0 0 40 40"><path d="M7 22v11h26V22" stroke="#fff" fill="none" stroke-linecap="round" stroke-linejoin="round" stroke-width="4.6"/><path d="M20 7v12" stroke="#fff" fill="none" stroke-linecap="round" stroke-linejoin="round" stroke-width="5"/><path d="M11.5 17h17L20 27z" fill="#fff"/></svg>
<svg class="abs" style="left:2509px;top:22.400px" width="40" height="40" viewBox="-20.800 -20.800 41.600 41.600"><g fill="#fff"><rect x="-3.6" y="-16.6" width="7.2" height="7" rx="2" transform="rotate(0)"/><rect x="-3.6" y="-16.6" width="7.2" height="7" rx="2" transform="rotate(45)"/><rect x="-3.6" y="-16.6" width="7.2" height="7" rx="2" transform="rotate(90)"/><rect x="-3.6" y="-16.6" width="7.2" height="7" rx="2" transform="rotate(135)"/><rect x="-3.6" y="-16.6" width="7.2" height="7" rx="2" transform="rotate(180)"/><rect x="-3.6" y="-16.6" width="7.2" height="7" rx="2" transform="rotate(225)"/><rect x="-3.6" y="-16.6" width="7.2" height="7" rx="2" transform="rotate(270)"/><rect x="-3.6" y="-16.6" width="7.2" height="7" rx="2" transform="rotate(315)"/></g><circle r="10.2" fill="none" stroke="#fff" stroke-width="5.2"/></svg>
<svg class="abs" style="left:2588px;top:20px" width="40" height="40" viewBox="0 0 40 40"><circle cx="20" cy="20" r="15.3" fill="#fff"/><path d="M14.8 16.2c0-3.3 2.3-5.2 5.3-5.2s5.2 1.8 5.2 4.6c0 3.6-4.6 3.6-4.6 7.6" fill="none" stroke="#5c6b83" stroke-width="3.6"/><rect x="18.6" y="25.6" width="3.8" height="3.8" fill="#5c6b83"/></svg>
<svg class="abs" style="left:2662px;top:20px" width="44" height="40" viewBox="0 0 44 40"><path d="M18 7H9v26h9" stroke="#fff" fill="none" stroke-linecap="round" stroke-linejoin="round" stroke-width="4.6"/><path d="M19 20h10" stroke="#fff" fill="none" stroke-linecap="round" stroke-linejoin="round" stroke-width="5.4"/><path d="M27 11.5L37 20l-10 8.5z" fill="#fff"/></svg>
</div>
<div id="sidebar" class="layer">
<svg class="abs" style="left:16px;top:104px" width="60" height="60" viewBox="16 104 60 60"><path d="M22 132c0-11 8-20 19-20s19 7 19 17-8 15-19 15H21.5c3-2 4.5-4 4.5-6-2.5-1.500-4-3.500-4-6z" fill="#fff"/><circle cx="58" cy="143" r="15.500" fill="#5c6b83"/><circle cx="58" cy="143" r="12.3" fill="#fff"/><path d="M58 135.500v15M50.500 143h15" stroke="#5c6b83" stroke-width="3.600" stroke-linecap="round"/></svg>
<svg class="abs" style="left:16.0px;top:188.0px" width="56" height="56" viewBox="0 0 56 56"><defs><clipPath id="ac144216"><circle cx="28.0" cy="28.0" r="23.5"/></clipPath><filter id="af144216" x="-10%" y="-10%" width="120%" height="120%"><feGaussianBlur stdDeviation="0.55"/></filter></defs><circle cx="28.0" cy="28.0" r="28.0" fill="#fff"/><g clip-path="url(#ac144216)"><g transform="translate(4.5 4.5) scale(0.9791666666666666)" filter="url(#af144216)"><rect width="48" height="48" fill="#dde2e8"/>
<path d="M6 50c1-9 8-12 18-13s17 3 19 13z" fill="#1f2a44"/>
<path d="M30 38c5 0 10 3 12 12H30z" fill="#2b5aa0"/>
<path d="M17 33h13v8c-3 4-10 4-13 0z" fill="#e9c1a8"/>
<ellipse cx="24.500" cy="23" rx="10.500" ry="13" fill="#efcbb3"/>
<path d="M12.500 26c-3-14 4-22 13-22 9 0 15 6 12 19-1-5-3-9-6-11-5 4-13 5-17 8-1 2-1 4-2 6z" fill="#dccba9"/>
<path d="M22 4c5-2 11 0 13 4-4-2-9-3-13-4z" fill="#9a8a70"/>
<ellipse cx="20" cy="21.500" rx="1.700" ry="1" fill="#5b4a40"/><ellipse cx="29.500" cy="21.500" rx="1.700" ry="1" fill="#5b4a40"/>
<path d="M19.500 28.500c3 1.500 7 1.500 10 0-1 4.500-9 4.500-10 0z" fill="#fff"/>
<path d="M19 28c3 1.200 8 1.200 11 0" stroke="#b5705f" stroke-width=".8" fill="none"/></g></g></svg>
<svg class="abs" style="left:16.0px;top:276.0px" width="56" height="56" viewBox="0 0 56 56"><defs><clipPath id="ac244304"><circle cx="28.0" cy="28.0" r="23.5"/></clipPath><filter id="af244304" x="-10%" y="-10%" width="120%" height="120%"><feGaussianBlur stdDeviation="0.55"/></filter></defs><circle cx="28.0" cy="28.0" r="28.0" fill="#fff"/><g clip-path="url(#ac244304)"><g transform="translate(4.5 4.5) scale(0.9791666666666666)" filter="url(#af244304)"><rect width="48" height="48" fill="#e8e6e6"/>
<rect x="0" y="0" width="9" height="48" fill="#dedbdb"/>
<ellipse cx="43" cy="14" rx="3" ry="4" fill="#d98a3a"/>
<path d="M2 50c0-8 6-11 22-11s22 3 22 11z" fill="#363b49"/>
<path d="M16 36h16v8c-4 4-12 4-16 0z" fill="#d9ad95"/>
<ellipse cx="24" cy="24.500" rx="11" ry="15" fill="#e2b9a2"/>
<path d="M12.500 24c-2-14 3-20 11.500-20s13.500 6 11.500 20c-.5-5-1.500-9-3.500-11-5 1.500-11 1.500-16 0-2 2-3 6-3.500 11z" fill="#2b2220"/>
<path d="M15 30c2 7 6 10 9 10s7-3 9-10c-1 4-5 5.500-9 5.500s-8-1.500-9-5.500z" fill="#b98f7b"/>
<ellipse cx="19.500" cy="22.500" rx="2.400" ry="1.300" fill="#5a4038"/><ellipse cx="28.500" cy="22.500" rx="2.400" ry="1.300" fill="#5a4038"/>
<path d="M20.500 33.500h7" stroke="#a8705f" stroke-width="1.400" fill="none"/>
<path d="M24 24v5" stroke="#cfa08a" stroke-width="1.200"/></g></g></svg>
<svg class="abs" style="left:16.0px;top:364.0px" width="56" height="56" viewBox="0 0 56 56"><defs><clipPath id="ac344392"><circle cx="28.0" cy="28.0" r="23.5"/></clipPath><filter id="af344392" x="-10%" y="-10%" width="120%" height="120%"><feGaussianBlur stdDeviation="0.55"/></filter></defs><circle cx="28.0" cy="28.0" r="28.0" fill="#fff"/><g clip-path="url(#ac344392)"><g transform="translate(4.5 4.5) scale(0.9791666666666666)" filter="url(#af344392)"><rect width="48" height="48" fill="#d9d6d6"/>
<rect width="17" height="40" fill="#8a554b"/><path d="M0 10h17M0 18h17M0 26h17M0 34h17" stroke="#74443b" stroke-width="1"/>
<rect x="34" y="8" width="14" height="30" fill="#e8e6e8"/>
<path d="M6 50c2-10 9-13 20-13s17 3 19 13z" fill="#cfd9e2"/>
<path d="M8 40c4-3 9-4 13-4l-3 6-9 6z" fill="#20242c"/>
<circle cx="25" cy="14.500" r="12" fill="#1f1817"/><circle cx="15.500" cy="13" r="5" fill="#1f1817"/><circle cx="35" cy="14" r="5" fill="#1f1817"/><circle cx="30" cy="6" r="5" fill="#1f1817"/>
<ellipse cx="24.500" cy="25" rx="9" ry="11.500" fill="#a8705a"/>
<path d="M16 21c2-5 6-7 9-7s7 2 8.500 7c-3-3-6-4-9-4s-6 1-8.500 4z" fill="#1f1817"/>
<ellipse cx="20.500" cy="23" rx="1.700" ry="1" fill="#2a1a16"/><ellipse cx="28.500" cy="23" rx="1.700" ry="1" fill="#2a1a16"/>
<path d="M20.500 30.500c2.500 1.500 6 1.500 8.500 0-1.500 3-7 3-8.500 0z" fill="#f3e7e2"/></g></g></svg>
<svg class="abs" style="left:16.0px;top:452.0px" width="56" height="56" viewBox="0 0 56 56"><defs><clipPath id="ac444480"><circle cx="28.0" cy="28.0" r="23.5"/></clipPath><filter id="af444480" x="-10%" y="-10%" width="120%" height="120%"><feGaussianBlur stdDeviation="0.55"/></filter></defs><circle cx="28.0" cy="28.0" r="28.0" fill="#fff"/><g clip-path="url(#ac444480)"><g transform="translate(4.5 4.5) scale(0.9791666666666666)" filter="url(#af444480)"><rect width="48" height="48" fill="#f6f5f4"/>
<path d="M8 50c1-7 7-9 16-9s15 2 16 9z" fill="#c9b18a"/>
<path d="M16 37h15v8c-4 4-11 4-15 0z" fill="#dcae88"/>
<ellipse cx="24" cy="25.500" rx="11.500" ry="14.500" fill="#e9c19e"/>
<path d="M10.500 27c-3-15 4-23 13.500-23s16.500 7 13.500 22c-.5-6-2-10-4-12-6 2-13 1-18-1-3 3-4 8-5 14z" fill="#1a1412"/>
<path d="M17.500 22.500h5M26.500 22.500h5" stroke="#2a1c16" stroke-width="1.300"/>
<path d="M18 31c3.500 2 8.500 2 12 0-1.500 5-10.500 5-12 0z" fill="#fff"/>
<path d="M17.500 30.500c4 1.500 9 1.500 13 0" stroke="#b4705c" stroke-width=".8" fill="none"/></g></g></svg>
<svg class="abs" style="left:16.0px;top:540.0px" width="56" height="56" viewBox="0 0 56 56"><defs><clipPath id="ac544568"><circle cx="28.0" cy="28.0" r="23.5"/></clipPath><filter id="af544568" x="-10%" y="-10%" width="120%" height="120%"><feGaussianBlur stdDeviation="0.55"/></filter></defs><circle cx="28.0" cy="28.0" r="28.0" fill="#fff"/><g clip-path="url(#ac544568)"><g transform="translate(4.5 4.5) scale(0.9791666666666666)" filter="url(#af544568)"><rect width="48" height="48" fill="#e9e6e1"/>
<rect x="0" y="4" width="9" height="44" fill="#c9c2b8"/><rect x="38" y="16" width="6" height="9" fill="#3a3a3c"/>
<path d="M9 50c-2-22 2-42 15-42 15 0 19 20 17 42z" fill="#3b2a22"/>
<path d="M12 50c1-7 6-10 14-10s12 3 13 10z" fill="#d8c3a8"/><path d="M10 42l6 8h-8z" fill="#c9d8e4"/>
<ellipse cx="22.500" cy="26" rx="9.500" ry="12" fill="#e0b397"/>
<path d="M12.500 26c-1-11 4-16 11-16 6 0 11 4 10.500 13-3-4-6-7-8.500-9-3 4-9 7-13 12z" fill="#3b2a22"/>
<ellipse cx="18.500" cy="24.500" rx="1.600" ry=".9" fill="#2a1a14"/><ellipse cx="26.500" cy="24" rx="1.600" ry=".9" fill="#2a1a14"/>
<path d="M18 31c2.500 2 6.500 2 9-.5-1 4-8 4.500-9 .5z" fill="#fff"/></g></g></svg>
</div>
<div id="chat" class="layer">
<svg class="abs" style="left:88px;top:286px" width="17" height="36" viewBox="0 0 17 36"><path d="M17 1.500L0.500 18L17 34.500z" fill="#f4f6fa"/></svg>
<div id="chatpanel">
<div id="chathead"></div>
<div id="chatinput"></div>
</div>
<span class="t" style="left:136.52px;top:125.41px;font-size:32px;line-height:42px;color:#353d4b;font-weight:700;letter-spacing:-0.716px;">Josh Blumstein</span>
<span class="t" style="left:134.51px;top:172.14px;font-size:27px;line-height:35px;color:#8f9bae;letter-spacing:-0.063px;">In Transit,</span>
<span class="t" style="left:259.39px;top:172.14px;font-size:27px;line-height:35px;color:#3f97dc;letter-spacing:0.131px;">Task 528491</span>
<svg class="abs" style="left:738px;top:126px" width="40" height="40" viewBox="738 126 40 40"><circle cx="758" cy="138.300" r="8.600" fill="#8a9ab3"/><path d="M742 157.500c0-6 7-8.800 16-8.800s16 2.800 16 8.800c0 1.500-1 2.300-2.500 2.300h-27c-1.500 0-2.500-.8-2.500-2.300z" fill="#8a9ab3"/></svg>
<svg class="abs" style="left:806px;top:126px" width="36" height="36" viewBox="0 0 36 36"><circle cx="18" cy="18" r="16" fill="#8a9ab3"/><path d="M11.500 11.500l13 13M24.500 11.500l-13 13" stroke="#fff" stroke-width="4.600" stroke-linecap="round"/></svg>
<div class="abs" style="left:214px;top:248px;width:562px;height:52px;border-radius:26px;background:#3aa3fb"></div>
<span class="t" style="left:236.29px;top:258.14px;font-size:27px;line-height:35px;color:#fff;letter-spacing:-0.336px;">Hey Josh, I see you’re delayed. Any issues?</span>
<div class="abs" style="left:792px;top:248px;width:56px;height:56px;border-radius:50%;background:#d0e9fd"></div><span class="t" style="left:804.60px;top:262.72px;font-size:21px;line-height:27px;color:#3b8ed2;font-weight:700;letter-spacing:0.376px;">DV</span>
<span class="t" style="left:589.96px;top:312.03px;font-size:23px;line-height:30px;color:#6d7990;font-weight:700;letter-spacing:-0.396px;">Read</span><span class="t" style="left:649.75px;top:312.03px;font-size:23px;line-height:30px;color:#98a4b8;letter-spacing:1.024px;">11:25 AM</span>
<svg class="abs" style="left:128.0px;top:372.0px" width="56" height="56" viewBox="0 0 56 56"><defs><clipPath id="ac2156400"><circle cx="28.0" cy="28.0" r="28.0"/></clipPath><filter id="af2156400" x="-10%" y="-10%" width="120%" height="120%"><feGaussianBlur stdDeviation="0.55"/></filter></defs><g clip-path="url(#ac2156400)"><g transform="translate(0 0) scale(1.1666666666666667)" filter="url(#af2156400)"><rect width="48" height="48" fill="#e8e6e6"/>
<rect x="0" y="0" width="9" height="48" fill="#dedbdb"/>
<ellipse cx="43" cy="14" rx="3" ry="4" fill="#d98a3a"/>
<path d="M2 50c0-8 6-11 22-11s22 3 22 11z" fill="#363b49"/>
<path d="M16 36h16v8c-4 4-12 4-16 0z" fill="#d9ad95"/>
<ellipse cx="24" cy="24.500" rx="11" ry="15" fill="#e2b9a2"/>
<path d="M12.500 24c-2-14 3-20 11.500-20s13.500 6 11.500 20c-.5-5-1.500-9-3.500-11-5 1.500-11 1.500-16 0-2 2-3 6-3.500 11z" fill="#2b2220"/>
<path d="M15 30c2 7 6 10 9 10s7-3 9-10c-1 4-5 5.500-9 5.500s-8-1.500-9-5.500z" fill="#b98f7b"/>
<ellipse cx="19.500" cy="22.500" rx="2.400" ry="1.300" fill="#5a4038"/><ellipse cx="28.500" cy="22.500" rx="2.400" ry="1.300" fill="#5a4038"/>
<path d="M20.500 33.500h7" stroke="#a8705f" stroke-width="1.400" fill="none"/>
<path d="M24 24v5" stroke="#cfa08a" stroke-width="1.200"/></g></g></svg>
<div class="abs" style="left:200px;top:372px;width:560px;height:84px;border-radius:26px;background:#fff"></div>
<span class="t" style="left:223.29px;top:381.64px;font-size:27px;line-height:35px;color:#353d4b;letter-spacing:-0.009px;">Hey David, yeah there’s construction in the</span>
<span class="t" style="left:223.71px;top:413.64px;font-size:27px;line-height:35px;color:#353d4b;letter-spacing:0.717px;">neighborhood.</span>
<div class="abs" style="left:200px;top:464px;width:550px;height:52px;border-radius:26px;background:#fff"></div>
<span class="t" style="left:224.27px;top:473.64px;font-size:27px;line-height:35px;color:#353d4b;letter-spacing:0.119px;">Should be arriving in the next 10 minutes.</span>
<div class="abs" style="left:200px;top:524px;width:640px;height:52px;border-radius:26px;background:#fff"></div>
<span class="t" style="left:223.01px;top:533.64px;font-size:27px;line-height:35px;color:#353d4b;letter-spacing:0.085px;">I’ve already called the customer to let them know.</span>
<span class="t" style="left:223.25px;top:588.03px;font-size:23px;line-height:30px;color:#98a4b8;letter-spacing:1.095px;">11:25 AM</span>
<div class="abs" style="left:566px;top:652px;width:210px;height:52px;border-radius:26px;background:#3aa3fb"></div>
<span class="t" style="left:589.72px;top:662.14px;font-size:27px;line-height:35px;color:#fff;letter-spacing:0.013px;">Okay, thanks!</span>
<div class="abs" style="left:792px;top:652px;width:56px;height:56px;border-radius:50%;background:#d0e9fd"></div><span class="t" style="left:804.60px;top:666.72px;font-size:21px;line-height:27px;color:#3b8ed2;font-weight:700;letter-spacing:0.376px;">DV</span>
<span class="t" style="left:590.46px;top:716.03px;font-size:23px;line-height:30px;color:#6d7990;font-weight:700;letter-spacing:-0.396px;">Read</span><span class="t" style="left:650.25px;top:716.03px;font-size:23px;line-height:30px;color:#98a4b8;letter-spacing:1.024px;">11:26 AM</span>
<svg class="abs" style="left:128.0px;top:776.0px" width="56" height="56" viewBox="0 0 56 56"><defs><clipPath id="ac2156804"><circle cx="28.0" cy="28.0" r="28.0"/></clipPath><filter id="af2156804" x="-10%" y="-10%" width="120%" height="120%"><feGaussianBlur stdDeviation="0.55"/></filter></defs><g clip-path="url(#ac2156804)"><g transform="translate(0 0) scale(1.1666666666666667)" filter="url(#af2156804)"><rect width="48" height="48" fill="#e8e6e6"/>
<rect x="0" y="0" width="9" height="48" fill="#dedbdb"/>
<ellipse cx="43" cy="14" rx="3" ry="4" fill="#d98a3a"/>
<path d="M2 50c0-8 6-11 22-11s22 3 22 11z" fill="#363b49"/>
<path d="M16 36h16v8c-4 4-12 4-16 0z" fill="#d9ad95"/>
<ellipse cx="24" cy="24.500" rx="11" ry="15" fill="#e2b9a2"/>
<path d="M12.500 24c-2-14 3-20 11.500-20s13.500 6 11.500 20c-.5-5-1.500-9-3.500-11-5 1.500-11 1.500-16 0-2 2-3 6-3.500 11z" fill="#2b2220"/>
<path d="M15 30c2 7 6 10 9 10s7-3 9-10c-1 4-5 5.500-9 5.500s-8-1.500-9-5.500z" fill="#b98f7b"/>
<ellipse cx="19.500" cy="22.500" rx="2.400" ry="1.300" fill="#5a4038"/><ellipse cx="28.500" cy="22.500" rx="2.400" ry="1.300" fill="#5a4038"/>
<path d="M20.500 33.500h7" stroke="#a8705f" stroke-width="1.400" fill="none"/>
<path d="M24 24v5" stroke="#cfa08a" stroke-width="1.200"/></g></g></svg>
<div class="abs" style="left:200px;top:776px;width:636px;height:84px;border-radius:26px;background:#fff"></div>
<span class="t" style="left:223.29px;top:785.64px;font-size:27px;line-height:35px;color:#353d4b;letter-spacing:-0.191px;">Hey David, can you make a note on this</span>
<span class="t" style="left:224.35px;top:817.64px;font-size:27px;line-height:35px;color:#353d4b;letter-spacing:0.214px;">customer’s profile that their door code is #4723?</span>
<span class="t" style="left:223.25px;top:872.03px;font-size:23px;line-height:30px;color:#98a4b8;letter-spacing:1.095px;">11:28 AM</span>
<div class="abs" style="left:336px;top:932px;width:440px;height:52px;border-radius:26px;background:#3aa3fb"></div>
<span class="t" style="left:359.77px;top:942.14px;font-size:27px;line-height:35px;color:#fff;letter-spacing:0.180px;">Sure, adding to their profile now.</span>
<div class="abs" style="left:792px;top:932px;width:56px;height:56px;border-radius:50%;background:#d0e9fd"></div><span class="t" style="left:804.60px;top:946.72px;font-size:21px;line-height:27px;color:#3b8ed2;font-weight:700;letter-spacing:0.376px;">DV</span>
<span class="t" style="left:590.46px;top:996.03px;font-size:23px;line-height:30px;color:#6d7990;font-weight:700;letter-spacing:-0.396px;">Read</span><span class="t" style="left:650.25px;top:996.03px;font-size:23px;line-height:30px;color:#98a4b8;letter-spacing:1.024px;">11:29 AM</span>
<svg class="abs" style="left:128.0px;top:1056.0px" width="56" height="56" viewBox="0 0 56 56"><defs><clipPath id="ac21561084"><circle cx="28.0" cy="28.0" r="28.0"/></clipPath><filter id="af21561084" x="-10%" y="-10%" width="120%" height="120%"><feGaussianBlur stdDeviation="0.55"/></filter></defs><g clip-path="url(#ac21561084)"><g transform="translate(0 0) scale(1.1666666666666667)" filter="url(#af21561084)"><rect width="48" height="48" fill="#e8e6e6"/>
<rect x="0" y="0" width="9" height="48" fill="#dedbdb"/>
<ellipse cx="43" cy="14" rx="3" ry="4" fill="#d98a3a"/>
<path d="M2 50c0-8 6-11 22-11s22 3 22 11z" fill="#363b49"/>
<path d="M16 36h16v8c-4 4-12 4-16 0z" fill="#d9ad95"/>
<ellipse cx="24" cy="24.500" rx="11" ry="15" fill="#e2b9a2"/>
<path d="M12.500 24c-2-14 3-20 11.500-20s13.500 6 11.500 20c-.5-5-1.500-9-3.500-11-5 1.500-11 1.500-16 0-2 2-3 6-3.500 11z" fill="#2b2220"/>
<path d="M15 30c2 7 6 10 9 10s7-3 9-10c-1 4-5 5.500-9 5.500s-8-1.500-9-5.500z" fill="#b98f7b"/>
<ellipse cx="19.500" cy="22.500" rx="2.400" ry="1.300" fill="#5a4038"/><ellipse cx="28.500" cy="22.500" rx="2.400" ry="1.300" fill="#5a4038"/>
<path d="M20.500 33.500h7" stroke="#a8705f" stroke-width="1.400" fill="none"/>
<path d="M24 24v5" stroke="#cfa08a" stroke-width="1.200"/></g></g></svg>
<div class="abs" style="left:200px;top:1056px;width:482px;height:52px;border-radius:26px;background:#fff"></div>
<svg class="abs" style="left:226px;top:1066px" width="32" height="32" viewBox="226 1066 32 32"><path d="M231.500 1071v23.500l20-11.750z" fill="#8a9ab3" stroke="#8a9ab3" stroke-width="2" stroke-linejoin="round"/></svg>
<span class="t" style="left:271.54px;top:1067.51px;font-size:24.5px;line-height:32px;color:#2f3744;letter-spacing:0.590px;">0:00 / 0:17</span>
<div class="abs" style="left:434px;top:1080px;width:112px;height:4px;border-radius:2px;background:#d6dce4"></div>
<div class="abs" style="left:418px;top:1074px;width:16px;height:16px;border-radius:50%;background:#3aa3fb"></div>
<svg class="abs" style="left:566px;top:1064px" width="40" height="36" viewBox="566 1064 40 36"><path d="M570 1075.500h6l9.500-6.500v26l-9.500-6.500h-6z" fill="#8a9ab3"/><path d="M589.500 1076.500a7.500 7.500 0 0 1 0 11" fill="none" stroke="#8a9ab3" stroke-width="3" stroke-linecap="round"/><path d="M594.500 1070.500a15 15 0 0 1 0 23" fill="none" stroke="#8a9ab3" stroke-width="3" stroke-linecap="round"/></svg>
<svg class="abs" style="left:622px;top:1064px" width="40" height="36" viewBox="622 1064 40 36"><path d="M641 1070.500v9" stroke="#8a9ab3" stroke-width="5" stroke-linecap="round"/><path d="M632.500 1078.500h17l-8.500 9.500z" fill="#8a9ab3"/><path d="M628 1094h26" stroke="#8a9ab3" stroke-width="4" stroke-linecap="round"/></svg>
<span class="t" style="left:224.47px;top:1119.53px;font-size:23px;line-height:30px;color:#98a4b8;letter-spacing:0.293px;">4:23 PM</span>
<span class="t" style="left:136.64px;top:1323.53px;font-size:23px;line-height:30px;color:#98a5b9;letter-spacing:0.183px;">Josh is typing...</span>
<span class="t" style="left:134.79px;top:1394.14px;font-size:27px;line-height:35px;color:#aab4c4;letter-spacing:0.559px;">Message</span>
<svg class="abs" style="left:744px;top:1392px" width="32" height="40" viewBox="744 1392 32 40"><rect x="755.900" y="1396.100" width="7.700" height="19.500" rx="3.850" fill="#8a9ab3"/><path d="M751.400 1410V1411A8.350 8.350 0 0 0 768.100 1411V1410" fill="none" stroke="#8a9ab3" stroke-width="3" stroke-linecap="round"/><path d="M759.750 1420V1425.500" stroke="#8a9ab3" stroke-width="3"/><path d="M753.800 1426H766.200" stroke="#8a9ab3" stroke-width="3.500" stroke-linecap="round"/></svg>
<svg class="abs" style="left:808px;top:1392px" width="32" height="40" viewBox="808 1392 32 40"><path d="M817.700 1404V1419.700A6.300 6.300 0 0 0 830.300 1419.700V1401A3.150 3.150 0 0 0 824 1401V1417.300" fill="none" stroke="#8a9ab3" stroke-width="3.400" stroke-linecap="round"/></svg>
</div>
<div id="panel" class="layer">
<div class="abs" style="left:2028px;top:80px;width:704px;height:1.500px;background:#526078"></div>
<div class="abs" style="left:2028px;top:146px;width:704px;height:2px;background:#536179"></div>
<div class="abs" style="left:2026.500px;top:1472px;width:2px;height:64px;background:#55637a"></div>
<svg class="abs" style="left:2054px;top:98px" width="36" height="36" viewBox="2054 98 36 36"><circle cx="2070.100" cy="114.100" r="10.100" fill="none" stroke="#cad5e6" stroke-width="4.200"/><path d="M2078 122.200l6.800 6.600" stroke="#cad5e6" stroke-width="4.400" stroke-linecap="round"/></svg>
<span class="t" style="left:2116.25px;top:97.47px;font-size:27.5px;line-height:36px;color:#b1c1da;letter-spacing:-0.320px;">Search</span>
<svg class="abs" style="left:2628px;top:98px" width="36" height="32" viewBox="2628 98 36 32"><circle cx="2634.200" cy="106" r="2.400" fill="#fff"/><rect x="2638.700" y="103.95" width="21.500" height="4.100" rx="2.050" fill="#fff"/><circle cx="2634.200" cy="114.1" r="2.400" fill="#fff"/><rect x="2638.700" y="112.05" width="21.500" height="4.100" rx="2.050" fill="#fff"/><circle cx="2634.200" cy="122.2" r="2.400" fill="#fff"/><rect x="2638.700" y="120.15" width="21.500" height="4.100" rx="2.050" fill="#fff"/></svg>
<svg class="abs" style="left:2676px;top:107px" width="24" height="16" viewBox="0 0 24 16"><path d="M1 1h22L12 15z" fill="#fff"/></svg>
<svg class="abs" style="left:2052px;top:189px" width="24" height="16" viewBox="0 0 24 16"><path d="M1 1h22L12 15z" fill="#fff"/></svg>
<span class="t" style="left:2098.92px;top:162.14px;font-size:27px;line-height:35px;color:#fff;letter-spacing:0.914px;-webkit-text-stroke:0.7px #fff;">Unassigned</span>
<span class="t" style="left:2099.64px;top:198.14px;font-size:27px;line-height:35px;color:#c4d1e8;letter-spacing:-0.286px;">2 Tasks</span>
<svg class="abs" style="left:2106.50px;top:274.00px" width="27.00" height="36.50" viewBox="-2 -2 27.00 36.50"><path d="M11.50 32.50C6.33 26.00 0 18.85 0 11.50A11.50 11.50 0 0 1 23.00 11.50C23.00 18.85 16.68 26.00 11.50 32.50Z" fill="#a9b7cc" /></svg>
<span class="t" style="left:2154.94px;top:258.14px;font-size:27px;line-height:35px;color:#fff;letter-spacing:0.433px;-webkit-text-stroke:0.7px #fff;">133 Shipley St</span>
<span class="t" style="left:2154.79px;top:294.14px;font-size:27px;line-height:35px;color:#c4d1e8;letter-spacing:-0.081px;">Rinchen Lama</span>
<svg class="abs" style="left:2106.50px;top:370.00px" width="27.00" height="36.50" viewBox="-2 -2 27.00 36.50"><path d="M11.50 32.50C6.33 26.00 0 18.85 0 11.50A11.50 11.50 0 0 1 23.00 11.50C23.00 18.85 16.68 26.00 11.50 32.50Z" fill="#a9b7cc" /></svg>
<span class="t" style="left:2154.94px;top:354.14px;font-size:27px;line-height:35px;color:#fff;letter-spacing:0.663px;-webkit-text-stroke:0.7px #fff;">1298 Haight St</span>
<span class="t" style="left:2154.79px;top:390.14px;font-size:27px;line-height:35px;color:#c4d1e8;letter-spacing:0.542px;">Ben Stott</span>
<svg class="abs" style="left:2052px;top:477px" width="24" height="16" viewBox="0 0 24 16"><path d="M1 1h22L12 15z" fill="#fff"/></svg>
<svg class="abs" style="left:2102px;top:467px" width="36" height="36" viewBox="0 0 36 36"><circle cx="22" cy="11.100" r="6.100" fill="#fff"/><circle cx="14" cy="11.100" r="8.100" fill="#5c6b83"/><circle cx="14" cy="11.100" r="6.100" fill="#fff"/><path d="M1.800 27.500C1.800 23 7 20 14.100 20S26.400 23 26.400 27.500C26.400 28.500 25.800 29 25 29H3.200C2.400 29 1.800 28.500 1.800 27.500Z" fill="#fff"/><path d="M25.500 20.600C30.500 21 34.100 23.800 34.100 27.500C34.100 28.500 33.500 29 32.700 29H28.600C28.900 28.500 29 28 29 27.500C29 24.800 27.600 22.400 25.500 20.600Z" fill="#fff"/></svg>
<span class="t" style="left:2155.77px;top:450.14px;font-size:27px;line-height:35px;color:#fff;letter-spacing:0.376px;-webkit-text-stroke:0.7px #fff;">San Francisco Team</span>
<span class="t" style="left:2155.92px;top:486.14px;font-size:27px;line-height:35px;color:#c4d1e8;letter-spacing:-0.151px;">5 of 8 On Duty</span>
<div class="abs" style="left:2036px;top:532px;width:688px;height:912px;border-radius:5px;background:#4f5e76"></div>
<svg class="abs" style="left:2108px;top:573px" width="24" height="16" viewBox="0 0 24 16"><path d="M1 1h22L12 15z" fill="#fff"/></svg>
<div class="abs" style="left:2161.500px;top:565.500px;width:29px;height:29px;border-radius:50%;background:#3aa3fb"></div>
<span class="t" style="left:2211.58px;top:546.14px;font-size:27px;line-height:35px;color:#fff;letter-spacing:0.930px;-webkit-text-stroke:0.7px #fff;">Josh Blumstein</span>
<span class="t" style="left:2209.51px;top:582.14px;font-size:27px;line-height:35px;color:#c4d1e8;letter-spacing:-0.058px;">In Transit, 2 of 6, 4 min</span>
<svg class="abs" style="left:2646.00px;top:561.50px" width="28.00" height="37.00" viewBox="-2 -2 28.00 37.00"><path d="M12.00 33.00C6.60 26.40 0 19.14 0 12.00A12.00 12.00 0 0 1 24.00 12.00C24.00 19.14 17.40 26.40 12.00 33.00Z" fill="#f8c500"  stroke="rgba(10,20,10,0.33)" stroke-width="2.600" paint-order="stroke"/></svg>
<span class="t" style="left:2685.30px;top:561.64px;font-size:27px;line-height:35px;color:#fff;-webkit-text-stroke:0.7px #fff;">1</span>
<span class="t" style="left:2112.12px;top:658.14px;font-size:27px;line-height:35px;color:#8f9eb9;">1</span>
<svg class="abs" style="left:2162.50px;top:657.50px" width="27.00" height="36.50" viewBox="-2 -2 27.00 36.50"><path d="M11.50 32.50C6.33 26.00 0 18.85 0 11.50A11.50 11.50 0 0 1 23.00 11.50C23.00 18.85 16.68 26.00 11.50 32.50Z" fill="#8cdb52"  stroke="rgba(10,20,10,0.33)" stroke-width="2.600" paint-order="stroke"/></svg>
<span class="t" style="left:2211.38px;top:642.14px;font-size:27px;line-height:35px;color:#fff;letter-spacing:0.634px;-webkit-text-stroke:0.7px #fff;">477 Hickory St</span>
<span class="t" style="left:2209.79px;top:678.14px;font-size:27px;line-height:35px;color:#c4d1e8;letter-spacing:0.466px;">Lia Longo</span>
<span class="t" style="left:2597.83px;top:678.14px;font-size:27px;line-height:35px;color:#c4d1e8;letter-spacing:0.472px;">8:26 PM</span>
<div class="abs" style="left:2212px;top:724.5px;width:488px;height:7px;border-radius:4px;background:#435169"></div><div class="abs" style="left:2512px;top:724.5px;width:68px;height:7px;border-radius:4px;background:#8f9fbb"></div><div class="abs" style="left:2602.5px;top:724.5px;width:7px;height:7px;border-radius:50%;background:#fff"></div>
<span class="t" style="left:2211.02px;top:740.01px;font-size:24.5px;line-height:32px;color:#c4d1e8;letter-spacing:0.454px;">5:00 PM – 7:00 PM</span>
<span class="t" style="left:2112.49px;top:814.14px;font-size:27px;line-height:35px;color:#8f9eb9;">2</span>
<svg class="abs" style="left:2162.50px;top:813.50px" width="27.00" height="36.50" viewBox="-2 -2 27.00 36.50"><path d="M11.50 32.50C6.33 26.00 0 18.85 0 11.50A11.50 11.50 0 0 1 23.00 11.50C23.00 18.85 16.68 26.00 11.50 32.50Z" fill="#3aa3fb"  stroke="rgba(10,20,10,0.33)" stroke-width="2.600" paint-order="stroke"/></svg>
<span class="t" style="left:2209.94px;top:798.14px;font-size:27px;line-height:35px;color:#fff;letter-spacing:0.664px;-webkit-text-stroke:0.7px #fff;">1646 Sutter St</span>
<span class="t" style="left:2211.58px;top:834.14px;font-size:27px;line-height:35px;color:#c4d1e8;letter-spacing:-0.011px;">John Baily</span>
<span class="t" style="left:2597.83px;top:834.14px;font-size:27px;line-height:35px;color:#c4d1e8;letter-spacing:0.472px;">8:38 PM</span>
<div class="abs" style="left:2212px;top:880.5px;width:488px;height:7px;border-radius:4px;background:#435169"></div><div class="abs" style="left:2592px;top:880.5px;width:58px;height:7px;border-radius:4px;background:#8f9fbb"></div><div class="abs" style="left:2602.5px;top:880.5px;width:7px;height:7px;border-radius:50%;background:#fff"></div>
<span class="t" style="left:2210.94px;top:896.01px;font-size:24.5px;line-height:32px;color:#c4d1e8;letter-spacing:0.454px;">8:00 PM – 10:00 PM</span>
<span class="t" style="left:2112.57px;top:970.14px;font-size:27px;line-height:35px;color:#8f9eb9;">3</span>
<svg class="abs" style="left:2162.50px;top:969.50px" width="27.00" height="36.50" viewBox="-2 -2 27.00 36.50"><path d="M11.50 32.50C6.33 26.00 0 18.85 0 11.50A11.50 11.50 0 0 1 23.00 11.50C23.00 18.85 16.68 26.00 11.50 32.50Z" fill="#c49bf8"  stroke="rgba(10,20,10,0.33)" stroke-width="2.600" paint-order="stroke"/></svg>
<span class="t" style="left:2210.64px;top:954.14px;font-size:27px;line-height:35px;color:#fff;letter-spacing:0.670px;-webkit-text-stroke:0.7px #fff;">2100 Washington St</span>
<span class="t" style="left:2209.79px;top:990.14px;font-size:27px;line-height:35px;color:#c4d1e8;letter-spacing:0.341px;">Kevin Angel</span>
<span class="t" style="left:2597.83px;top:990.14px;font-size:27px;line-height:35px;color:#c4d1e8;letter-spacing:0.472px;">8:45 PM</span>
<div class="abs" style="left:2212px;top:1036.5px;width:488px;height:7px;border-radius:4px;background:#435169"></div><div class="abs" style="left:2603px;top:1036.5px;width:81px;height:7px;border-radius:4px;background:#8f9fbb"></div><div class="abs" style="left:2602.5px;top:1036.5px;width:7px;height:7px;border-radius:50%;background:#fff"></div>
<span class="t" style="left:2210.94px;top:1052.01px;font-size:24.5px;line-height:32px;color:#c4d1e8;letter-spacing:0.561px;">8:30 PM – 11:00 PM</span>
<span class="t" style="left:2112.58px;top:1126.14px;font-size:27px;line-height:35px;color:#8f9eb9;">4</span>
<svg class="abs" style="left:2162.50px;top:1125.50px" width="27.00" height="36.50" viewBox="-2 -2 27.00 36.50"><path d="M11.50 32.50C6.33 26.00 0 18.85 0 11.50A11.50 11.50 0 0 1 23.00 11.50C23.00 18.85 16.68 26.00 11.50 32.50Z" fill="#c49bf8"  stroke="rgba(10,20,10,0.33)" stroke-width="2.600" paint-order="stroke"/></svg>
<span class="t" style="left:2209.94px;top:1110.14px;font-size:27px;line-height:35px;color:#fff;letter-spacing:0.636px;-webkit-text-stroke:0.7px #fff;">1944 Mason St</span>
<span class="t" style="left:2209.79px;top:1146.14px;font-size:27px;line-height:35px;color:#c4d1e8;letter-spacing:0.257px;">No Recipient</span>
<span class="t" style="left:2112.52px;top:1222.14px;font-size:27px;line-height:35px;color:#8f9eb9;">5</span>
<svg class="abs" style="left:2162.50px;top:1221.50px" width="27.00" height="36.50" viewBox="-2 -2 27.00 36.50"><path d="M11.50 32.50C6.33 26.00 0 18.85 0 11.50A11.50 11.50 0 0 1 23.00 11.50C23.00 18.85 16.68 26.00 11.50 32.50Z" fill="#f8c500"  stroke="rgba(10,20,10,0.33)" stroke-width="2.600" paint-order="stroke"/></svg>
<span class="t" style="left:2210.73px;top:1206.14px;font-size:27px;line-height:35px;color:#fff;letter-spacing:0.608px;-webkit-text-stroke:0.7px #fff;">99 2nd St</span>
<span class="t" style="left:2210.64px;top:1242.14px;font-size:27px;line-height:35px;color:#c4d1e8;letter-spacing:0.445px;">Gray McCarty</span>
<div class="abs" style="left:2212px;top:1288.5px;width:488px;height:7px;border-radius:4px;background:#435169"></div><div class="abs" style="left:2212px;top:1288.5px;width:380px;height:7px;border-radius:4px;background:#8f9fbb"></div><div class="abs" style="left:2602.5px;top:1288.5px;width:7px;height:7px;border-radius:50%;background:#fff"></div>
<span class="t" style="left:2209.99px;top:1304.01px;font-size:24.5px;line-height:32px;color:#c4d1e8;letter-spacing:0.522px;">Before 7:30 PM</span>
<span class="t" style="left:2112.40px;top:1378.14px;font-size:27px;line-height:35px;color:#8f9eb9;">6</span>
<svg class="abs" style="left:2162.50px;top:1377.50px" width="27.00" height="36.50" viewBox="-2 -2 27.00 36.50"><path d="M11.50 32.50C6.33 26.00 0 18.85 0 11.50A11.50 11.50 0 0 1 23.00 11.50C23.00 18.85 16.68 26.00 11.50 32.50Z" fill="#c49bf8"  stroke="rgba(10,20,10,0.33)" stroke-width="2.600" paint-order="stroke"/></svg>
<span class="t" style="left:2210.63px;top:1362.14px;font-size:27px;line-height:35px;color:#fff;letter-spacing:0.641px;-webkit-text-stroke:0.7px #fff;">600 Harrison St</span>
<span class="t" style="left:2209.79px;top:1398.14px;font-size:27px;line-height:35px;color:#c4d1e8;letter-spacing:-0.031px;">Brian Rekasis</span>
<svg class="abs" style="left:2108px;top:1485px" width="24" height="16" viewBox="0 0 24 16"><path d="M1 1h22L12 15z" fill="#fff"/></svg>
<div class="abs" style="left:2161.500px;top:1477px;width:29px;height:29px;border-radius:50%;background:#3aa3fb"></div>
<span class="t" style="left:2210.63px;top:1458.14px;font-size:27px;line-height:35px;color:#fff;letter-spacing:0.727px;-webkit-text-stroke:0.7px #fff;">Cindy Cheung</span>
<span class="t" style="left:2210.72px;top:1494.14px;font-size:27px;line-height:35px;color:#c4d1e8;">Offline, 0 of 4</span>
</div>
<div id="bottombar" class="layer">
<svg class="abs" style="left:28px;top:1484px" width="48" height="40" viewBox="28 1484 48 40"><path d="M40.800 1493.700a2 2 0 0 1 2-2h3.400a2 2 0 0 1 2 2v3h5.400v-3a2 2 0 0 1 2-2h3.400a2 2 0 0 1 2 2L69.600 1509H54v-2.700h-6.200V1509H32.200z" fill="#fff"/><circle cx="40" cy="1510.200" r="8.200" fill="#fff"/><circle cx="61.800" cy="1510.200" r="8.200" fill="#fff"/><circle cx="40" cy="1510.200" r="4.400" fill="#5c6b83"/><circle cx="61.800" cy="1510.200" r="4.400" fill="#5c6b83"/></svg>
<svg class="abs" style="left:80px;top:1496px" width="24" height="18" viewBox="0 0 24 18"><path d="M0.900 1.700h22.400L12.100 16z" fill="#fff"/></svg>
<svg class="abs" style="left:178px;top:1486px" width="36" height="36" viewBox="0 0 36 36"><circle cx="18" cy="18" r="16.300" fill="#fff"/><path d="M18 8.800v11.500h9.400" fill="none" stroke="#5c6b83" stroke-width="3.400" stroke-linecap="round" stroke-linejoin="round"/></svg>
<span class="t" style="left:231.93px;top:1486.99px;font-size:26px;line-height:34px;color:#fff;letter-spacing:-0.107px;-webkit-text-stroke:0.6px #fff;">Yesterday 11pm — Tomorrow 12am</span>
<svg class="abs" style="left:706px;top:1486.7px" width="36" height="36" viewBox="0 0 36 36"><circle cx="22" cy="11.100" r="6.100" fill="#fff"/><circle cx="14" cy="11.100" r="8.100" fill="#5c6b83"/><circle cx="14" cy="11.100" r="6.100" fill="#fff"/><path d="M1.800 27.500C1.800 23 7 20 14.100 20S26.400 23 26.400 27.500C26.400 28.500 25.800 29 25 29H3.200C2.400 29 1.800 28.500 1.800 27.500Z" fill="#fff"/><path d="M25.500 20.600C30.500 21 34.100 23.800 34.100 27.500C34.100 28.500 33.500 29 32.700 29H28.600C28.900 28.500 29 28 29 27.500C29 24.800 27.600 22.400 25.500 20.600Z" fill="#fff"/></svg>
<span class="t" style="left:760.45px;top:1486.99px;font-size:26px;line-height:34px;color:#fff;letter-spacing:-0.155px;-webkit-text-stroke:0.6px #fff;">All Teams</span>
<div class="abs" style="left:941px;top:1489.500px;width:29px;height:29px;border-radius:50%;background:#fff"></div>
<span class="t" style="left:991.95px;top:1486.99px;font-size:26px;line-height:34px;color:#fff;letter-spacing:0.054px;-webkit-text-stroke:0.6px #fff;">All Drivers</span>
<svg class="abs" style="left:1182.30px;top:1486.50px" width="27.00" height="35.50" viewBox="-2 -2 27.00 35.50"><path d="M11.50 31.50C6.33 25.20 0 18.27 0 11.50A11.50 11.50 0 0 1 23.00 11.50C23.00 18.27 16.68 25.20 11.50 31.50Z" fill="#fff" /></svg>
<span class="t" style="left:1232.45px;top:1486.99px;font-size:26px;line-height:34px;color:#fff;letter-spacing:-0.140px;-webkit-text-stroke:0.6px #fff;">All Tasks</span>
<svg class="abs" style="left:1399.500px;top:1486px" width="36" height="36" viewBox="0 0 36 36"><path d="M29.300 9.200A14 14 0 1 0 30.500 25" fill="none" stroke="#fff" stroke-width="4.200" stroke-linecap="round"/><path d="M14 11.500v13.500l11.500-6.750z" fill="#fff"/></svg>
<span class="t" style="left:1454.45px;top:1486.99px;font-size:26px;line-height:34px;color:#fff;letter-spacing:0.133px;-webkit-text-stroke:0.6px #fff;">All Connected Organizations</span>
</div>
</body></html>
